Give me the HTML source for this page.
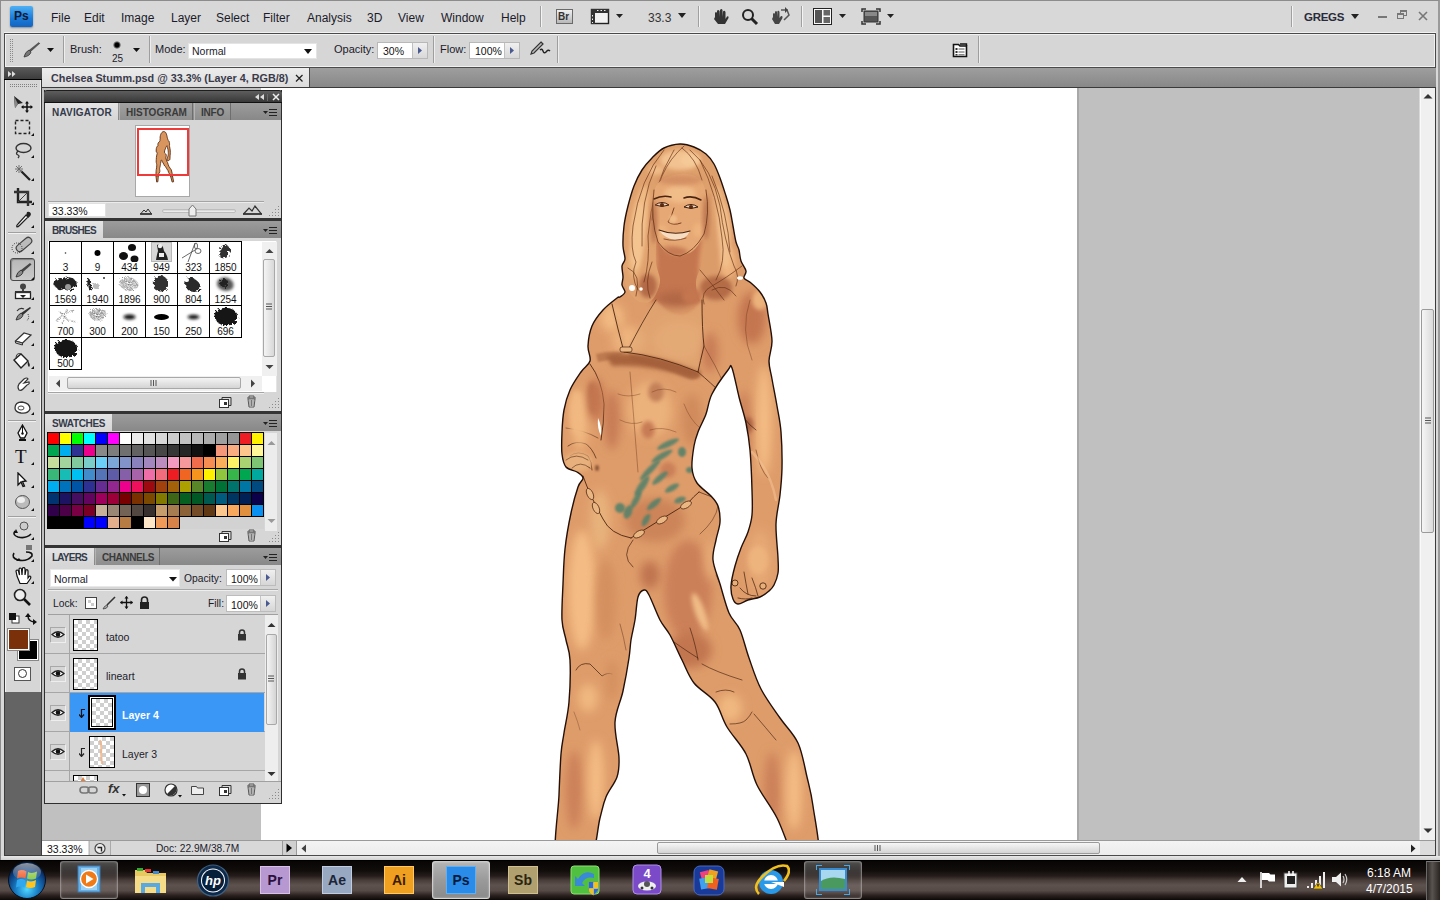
<!DOCTYPE html>
<html><head><meta charset="utf-8">
<style>
*{margin:0;padding:0;box-sizing:border-box}
html,body{width:1440px;height:900px;overflow:hidden;background:#d6d6d6;font-family:"Liberation Sans",sans-serif;color:#1b1b2b}
.a{position:absolute}
.t{position:absolute;white-space:nowrap;font-size:12px;line-height:14px}
</style></head><body>
<!-- window frame -->
<div class="a" style="left:0;top:0;width:1440px;height:860px;background:#d8d8d8;border-left:1px solid #8c8c8c;border-right:2px solid #9a9a9a;border-top:1px solid #8c8c8c"></div>
<!-- MENU BAR -->
<div id="menubar">
 <div class="a" style="left:10px;top:6px;width:23px;height:21px;border-radius:2px;background:linear-gradient(#4fb0f5,#1a7ad8 60%,#1464c0);box-shadow:0 1px 2px rgba(0,0,0,.35)"></div>
 <div class="t" style="left:14px;top:9px;font-size:12px;font-weight:bold;color:#0b1a33">Ps</div>
 <div class="t" style="left:51px;top:11px;font-size:12px">File</div>
 <div class="t" style="left:84px;top:11px;font-size:12px">Edit</div>
 <div class="t" style="left:121px;top:11px;font-size:12px">Image</div>
 <div class="t" style="left:171px;top:11px;font-size:12px">Layer</div>
 <div class="t" style="left:216px;top:11px;font-size:12px">Select</div>
 <div class="t" style="left:263px;top:11px;font-size:12px">Filter</div>
 <div class="t" style="left:307px;top:11px;font-size:12px">Analysis</div>
 <div class="t" style="left:367px;top:11px;font-size:12px">3D</div>
 <div class="t" style="left:398px;top:11px;font-size:12px">View</div>
 <div class="t" style="left:441px;top:11px;font-size:12px">Window</div>
 <div class="t" style="left:501px;top:11px;font-size:12px">Help</div>
 <div class="a" style="left:540px;top:6px;width:1px;height:21px;background:#a0a0a0;box-shadow:1px 0 0 #f4f4f4"></div>
 <div class="a" style="left:556px;top:9px;width:17px;height:15px;border:1px solid #6a6a6a;background:linear-gradient(#f0f0f0,#b8b8b8)"></div>
 <div class="t" style="left:558px;top:10px;font-size:10px;font-weight:bold;color:#333">Br</div>
 <svg class="a" style="left:590px;top:8px" width="36" height="18"><rect x="1.5" y="1.5" width="17" height="14" fill="#f2f2f2" stroke="#222" stroke-width="1.4"/><rect x="1" y="1" width="18" height="4" fill="#333"/><rect x="1" y="1" width="4" height="15" fill="#333"/><path d="M7 2.5h1.5M10.5 2.5h1.5M14 2.5h1.5M2.5 7v1.5M2.5 10.5v1.5M2.5 14v1" stroke="#eee" stroke-width="1"/><path d="M26 6h7l-3.5 4z" fill="#222"/></svg>
 <div class="t" style="left:648px;top:11px;font-size:12px;color:#333">33.3</div>
 <svg class="a" style="left:678px;top:13px" width="9" height="6"><path d="M0 0h8l-4 5z" fill="#222"/></svg>
 <div class="a" style="left:698px;top:6px;width:1px;height:21px;background:#a0a0a0;box-shadow:1px 0 0 #f4f4f4"></div>
 <svg class="a" style="left:711px;top:8px" width="20" height="18"><path d="M4 9 L4 5 Q5 3 6 5 L6 9 L6 3 Q7 1 8.5 3 L8.5 9 L9 2 Q10.5 0 11.5 2 L11.5 9 L12 3.5 Q13.5 2 14.5 4 L14.5 11 L16 8.5 Q18 7.5 17.5 10 L14 16 L7 16 L3 11 Z" fill="#333"/></svg>
 <svg class="a" style="left:741px;top:8px" width="18" height="18"><circle cx="7" cy="7" r="5" fill="none" stroke="#222" stroke-width="2"/><path d="M10.5 10.5 L16 16" stroke="#222" stroke-width="3"/></svg>
 <svg class="a" style="left:770px;top:7px" width="20" height="19"><path d="M3 10 L3 7 Q4 5 5 7 L5 10 L5 5 Q6 3 7 5 L7 10 L7.5 4 Q9 3 9.5 5 L9.5 11 L11 9 Q13 8.5 12.5 11 L9 17 L5 17 L2 12 Z" fill="#444"/><path d="M11 3 L17 3 L19 8 L14 13" fill="none" stroke="#555" stroke-width="1.5"/><path d="M15 0 L18 3 L15 6z" fill="#444"/></svg>
 <div class="a" style="left:801px;top:6px;width:1px;height:21px;background:#a0a0a0;box-shadow:1px 0 0 #f4f4f4"></div>
 <svg class="a" style="left:813px;top:8px" width="34" height="18"><rect x="0.5" y="0.5" width="18" height="16" fill="#fafafa" stroke="#222"/><rect x="2" y="2" width="7" height="13" fill="#555"/><rect x="10.5" y="2" width="6.5" height="5.5" fill="#666"/><rect x="10.5" y="9" width="6.5" height="6" fill="#666"/><path d="M26 6h7l-3.5 4z" fill="#222"/></svg>
 <svg class="a" style="left:861px;top:8px" width="36" height="18"><path d="M1 4V1h4M15 1h4v3M19 13v3h-4M5 16H1v-3" fill="none" stroke="#333" stroke-width="1.5"/><rect x="3" y="3" width="14" height="11" fill="#555" stroke="#333"/><rect x="4" y="4" width="12" height="4" fill="#888"/><path d="M26 6h7l-3.5 4z" fill="#222"/></svg>
 <div class="a" style="left:1291px;top:6px;width:1px;height:21px;background:#a0a0a0;box-shadow:1px 0 0 #f4f4f4"></div>
 <div class="t" style="left:1304px;top:10px;font-size:11.5px;font-weight:bold;color:#2a2a3a;letter-spacing:-0.3px">GREGS</div>
 <svg class="a" style="left:1351px;top:14px" width="9" height="6"><path d="M0 0h8l-4 5z" fill="#222"/></svg>
 <div class="a" style="left:1378px;top:16px;width:9px;height:2px;background:#777"></div>
 <svg class="a" style="left:1397px;top:10px" width="11" height="10"><rect x="3.5" y="0.5" width="6" height="5" fill="none" stroke="#777"/><rect x="0.5" y="3.5" width="6" height="5" fill="#d8d8d8" stroke="#777"/><rect x="0.5" y="3.5" width="6" height="1.5" fill="#777"/><rect x="3.5" y="0.5" width="6" height="1.5" fill="#777"/></svg>
 <svg class="a" style="left:1418px;top:11px" width="10" height="10"><path d="M1 1L9 9M9 1L1 9" stroke="#777" stroke-width="1.6"/></svg>
</div>
<!-- OPTIONS BAR -->
<div class="a" style="left:4px;top:32px;width:1432px;height:1px;background:#f2f2f2"></div><div class="a" style="left:4px;top:33px;width:1432px;height:35px;border:1px solid #4a4a4a;background:#d6d6d6;box-shadow:inset 1px 1px 0 #f2f2f2, inset -1px -1px 0 #f0f0f0"></div>
<svg class="a" style="left:10px;top:39px" width="3" height="24"><rect x="0" y="0" width="1" height="1" fill="#8a8a8a"/><rect x="0" y="2" width="1" height="1" fill="#8a8a8a"/><rect x="0" y="4" width="1" height="1" fill="#8a8a8a"/><rect x="0" y="6" width="1" height="1" fill="#8a8a8a"/><rect x="0" y="8" width="1" height="1" fill="#8a8a8a"/><rect x="0" y="10" width="1" height="1" fill="#8a8a8a"/><rect x="0" y="12" width="1" height="1" fill="#8a8a8a"/><rect x="0" y="14" width="1" height="1" fill="#8a8a8a"/><rect x="0" y="16" width="1" height="1" fill="#8a8a8a"/><rect x="0" y="18" width="1" height="1" fill="#8a8a8a"/><rect x="0" y="20" width="1" height="1" fill="#8a8a8a"/><rect x="0" y="22" width="1" height="1" fill="#8a8a8a"/><rect x="2" y="0" width="1" height="1" fill="#8a8a8a"/><rect x="2" y="2" width="1" height="1" fill="#8a8a8a"/><rect x="2" y="4" width="1" height="1" fill="#8a8a8a"/><rect x="2" y="6" width="1" height="1" fill="#8a8a8a"/><rect x="2" y="8" width="1" height="1" fill="#8a8a8a"/><rect x="2" y="10" width="1" height="1" fill="#8a8a8a"/><rect x="2" y="12" width="1" height="1" fill="#8a8a8a"/><rect x="2" y="14" width="1" height="1" fill="#8a8a8a"/><rect x="2" y="16" width="1" height="1" fill="#8a8a8a"/><rect x="2" y="18" width="1" height="1" fill="#8a8a8a"/><rect x="2" y="20" width="1" height="1" fill="#8a8a8a"/><rect x="2" y="22" width="1" height="1" fill="#8a8a8a"/></svg>
<svg class="a" style="left:22px;top:41px" width="20" height="18"><path d="M17 1 L18.5 2.5 L9 11 L7 9 Z" fill="#555"/><path d="M17 1 L18.5 2.5 L9 11" fill="none" stroke="#eee" stroke-width="0.6"/><path d="M7 9 L9 11 Q8 15 2 16 Q3 11 7 9Z" fill="#777" stroke="#333" stroke-width="0.8"/></svg>
<svg class="a" style="left:47px;top:48px" width="8" height="5"><path d="M0 0h7l-3.5 4z" fill="#111"/></svg>
<div class="a" style="left:63px;top:36px;width:1px;height:27px;background:#9e9e9e;box-shadow:1px 0 0 #eee"></div>
<div class="t" style="left:70px;top:42px;font-size:11px;color:#1b1b2b">Brush:</div>
<div class="a" style="left:113px;top:41px;width:8px;height:8px;border-radius:50%;background:radial-gradient(#000 35%,rgba(0,0,0,0) 75%)"></div>
<div class="t" style="left:112px;top:52px;font-size:10px;color:#1b1b2b">25</div>
<svg class="a" style="left:133px;top:48px" width="8" height="5"><path d="M0 0h7l-3.5 4z" fill="#111"/></svg>
<div class="a" style="left:149px;top:36px;width:1px;height:27px;background:#9e9e9e;box-shadow:1px 0 0 #eee"></div>
<div class="t" style="left:155px;top:42px;font-size:11px;color:#1b1b2b">Mode:</div>
<div class="a" style="left:188px;top:43px;width:129px;height:16px;background:#fff;border:1px solid #e4e4e4"></div>
<div class="t" style="left:192px;top:44px;font-size:10.5px;color:#1b1b2b">Normal</div>
<svg class="a" style="left:304px;top:49px" width="9" height="6"><path d="M0 0h8l-4 5z" fill="#111"/></svg>
<div class="t" style="left:334px;top:42px;font-size:11px;color:#1b1b2b">Opacity:</div>
<div class="a" style="left:377px;top:42px;width:51px;height:17px;background:#fff;border:1px solid #b8b8b8"></div>
<div class="a" style="left:412px;top:43px;width:15px;height:15px;background:linear-gradient(#f0f0f0,#d8d8d8);border-left:1px solid #c0c0c0"></div>
<svg class="a" style="left:418px;top:47px" width="5" height="8"><path d="M0 0v7l4-3.5z" fill="#4a5a90"/></svg>
<div class="t" style="left:383px;top:44px;font-size:10.5px;color:#111">30%</div>
<div class="a" style="left:433px;top:36px;width:1px;height:27px;background:#9e9e9e;box-shadow:1px 0 0 #eee"></div>
<div class="t" style="left:440px;top:42px;font-size:11px;color:#1b1b2b">Flow:</div>
<div class="a" style="left:469px;top:42px;width:51px;height:17px;background:#fff;border:1px solid #b8b8b8"></div>
<div class="a" style="left:504px;top:43px;width:15px;height:15px;background:linear-gradient(#f0f0f0,#d8d8d8);border-left:1px solid #c0c0c0"></div>
<svg class="a" style="left:510px;top:47px" width="5" height="8"><path d="M0 0v7l4-3.5z" fill="#4a5a90"/></svg>
<div class="t" style="left:475px;top:44px;font-size:10.5px;color:#111">100%</div>
<svg class="a" style="left:528px;top:40px" width="24" height="20"><path d="M13 2 L15 4 L6 13 L3 14 L4 11 Z" fill="#bbb" stroke="#333" stroke-width="1.2"/><path d="M12 10 Q14 8 15 11 Q16 14 18 12 Q20 9 22 11" fill="none" stroke="#222" stroke-width="1.4"/></svg>
<div class="a" style="left:557px;top:36px;width:1px;height:27px;background:#9e9e9e;box-shadow:1px 0 0 #eee"></div>
<svg class="a" style="left:952px;top:42px" width="16" height="16"><path d="M1.5 2.5h5l1.5 1.5h6.5v10.5h-13z" fill="#fff" stroke="#111" stroke-width="1.6"/><path d="M8 2h6.5v2" stroke="#111" stroke-width="1.4" fill="none"/><rect x="3.5" y="6" width="2" height="2" fill="#333"/><rect x="3.5" y="9" width="2" height="2" fill="#333"/><rect x="3.5" y="12" width="2" height="1.5" fill="#333"/><path d="M6.5 7h6M6.5 10h6M6.5 12.8h6" stroke="#555" stroke-width="1"/></svg>
<div class="a" style="left:978px;top:36px;width:1px;height:27px;background:#9e9e9e;box-shadow:1px 0 0 #eee"></div>
<!-- TAB BAR -->
<div class="a" style="left:42px;top:68px;width:1394px;height:20px;background:linear-gradient(#9e9e9e,#888);border-bottom:1px solid #3a3a3a"></div>
<div class="a" style="left:42px;top:68px;width:268px;height:19px;background:linear-gradient(#ececec,#dcdcdc);border-right:1px solid #4a4a4a"></div>
<div class="t" style="left:51px;top:71px;font-size:10.8px;font-weight:bold;color:#3a3a4a">Chelsea Stumm.psd @ 33.3% (Layer 4, RGB/8)</div>
<svg class="a" style="left:295px;top:74px" width="9" height="9"><path d="M1 1l6.5 6.5M7.5 1l-6.5 6.5" stroke="#222" stroke-width="1.3"/></svg>
<!-- DOC AREA -->
<div class="a" style="left:42px;top:88px;width:1377px;height:752px;background:#c0c0c0"></div>
<div class="a" style="left:261px;top:88px;width:816px;height:752px;background:#fff"></div>
<div class="a" style="left:1077px;top:88px;width:2px;height:752px;background:#a8a8a8"></div>
<!-- FIGURE -->
<svg class="a" style="left:0;top:0" width="1440" height="900" viewBox="0 0 1440 900">
<defs><clipPath id="cv"><rect x="261" y="88" width="816" height="752"/></clipPath><clipPath id="bd"><path d="M680,144 C685.0,143.8 689.7,145.3 694,147 C698.3,148.7 702.7,151.2 706,154 C709.3,156.8 711.7,160.0 714,164 C716.3,168.0 718.0,172.7 720,178 C722.0,183.3 724.3,190.7 726,196 C727.7,201.3 728.8,205.0 730,210 C731.2,215.0 732.0,220.7 733,226 C734.0,231.3 735.0,238.0 736,242 C737.0,246.0 738.2,246.8 739,250 C739.8,253.2 739.8,257.5 741,261 C742.2,264.5 745.5,268.2 746,271 C746.5,273.8 743.2,276.0 744,278 C744.8,280.0 748.3,280.7 751,283 C753.7,285.3 757.5,288.7 760,292 C762.5,295.3 764.7,299.3 766,303 C767.3,306.7 767.0,307.7 768,314 C769.0,320.3 771.8,333.2 772,341 C772.2,348.8 769.0,354.7 769,361 C769.0,367.3 770.7,371.5 772,379 C773.3,386.5 775.5,397.2 777,406 C778.5,414.8 780.2,421.7 781,432 C781.8,442.3 782.2,457.5 782,468 C781.8,478.5 781.0,485.7 780,495 C779.0,504.3 776.3,513.5 776,524 C775.7,534.5 777.7,549.8 778,558 C778.3,566.2 778.7,568.5 778,573 C777.3,577.5 775.5,582.0 774,585 C772.5,588.0 771.3,589.0 769,591 C766.7,593.0 763.5,595.5 760,597 C756.5,598.5 751.7,598.8 748,600 C744.3,601.2 740.5,604.2 738,604 C735.5,603.8 734.2,602.0 733,599 C731.8,596.0 730.7,591.5 731,586 C731.3,580.5 733.3,572.3 735,566 C736.7,559.7 738.8,553.7 741,548 C743.2,542.3 746.2,537.5 748,532 C749.8,526.5 751.3,522.0 752,515 C752.7,508.0 752.3,500.8 752,490 C751.7,479.2 751.0,461.2 750,450 C749.0,438.8 747.8,431.8 746,423 C744.2,414.2 741.3,406.2 739,397 C736.7,387.8 733.8,372.5 732,368 C730.2,363.5 731.3,365.7 728,370 C724.7,374.3 715.7,386.7 712,394 C708.3,401.3 708.3,407.7 706,414 C703.7,420.3 700.0,426.7 698,432 C696.0,437.3 695.0,440.0 694,446 C693.0,452.0 691.5,461.8 692,468 C692.5,474.2 693.8,478.3 697,483 C700.2,487.7 707.5,492.2 711,496 C714.5,499.8 716.5,501.7 718,506 C719.5,510.3 720.3,516.3 720,522 C719.7,527.7 717.2,533.7 716,540 C714.8,546.3 712.3,552.7 713,560 C713.7,567.3 717.3,575.2 720,584 C722.7,592.8 725.7,605.3 729,613 C732.3,620.7 736.7,622.5 740,630 C743.3,637.5 745.5,648.2 749,658 C752.5,667.8 755.8,679.0 761,689 C766.2,699.0 773.8,709.0 780,718 C786.2,727.0 793.5,733.2 798,743 C802.5,752.8 804.5,766.5 807,777 C809.5,787.5 811.0,791.8 813,806 C815.0,820.2 821.7,852.7 819,862 C816.3,871.3 804.0,869.3 797,862 C790.0,854.7 783.7,830.8 777,818 C770.3,805.2 762.2,795.7 757,785 C751.8,774.3 751.0,763.7 746,754 C741.0,744.3 732.2,735.7 727,727 C721.8,718.3 720.5,709.3 715,702 C709.5,694.7 699.5,690.0 694,683 C688.5,676.0 686.0,668.0 682,660 C678.0,652.0 673.7,641.7 670,635 C666.3,628.3 663.5,626.7 660,620 C656.5,613.3 651.7,600.0 649,595 C646.3,590.0 645.8,589.7 644,590 C642.2,590.3 639.5,592.0 638,597 C636.5,602.0 636.2,612.8 635,620 C633.8,627.2 632.0,633.7 631,640 C630.0,646.3 630.3,649.5 629,658 C627.7,666.5 625.3,680.3 623,691 C620.7,701.7 615.7,710.8 615,722 C614.3,733.2 618.7,748.8 619,758 C619.3,767.2 619.2,770.5 617,777 C614.8,783.5 608.8,790.2 606,797 C603.2,803.8 602.8,807.2 600,818 C597.2,828.8 596.2,854.7 589,862 C581.8,869.3 562.0,873.2 557,862 C552.0,850.8 558.3,813.0 559,795 C559.7,777.0 560.2,764.3 561,754 C561.8,743.7 562.7,741.7 564,733 C565.3,724.3 568.0,714.2 569,702 C570.0,689.8 570.5,670.3 570,660 C569.5,649.7 567.3,646.7 566,640 C564.7,633.3 562.5,629.3 562,620 C561.5,610.7 562.5,595.8 563,584 C563.5,572.2 563.7,560.8 565,549 C566.3,537.2 568.8,523.3 571,513 C573.2,502.7 576.0,492.8 578,487 C580.0,481.2 583.2,480.5 583,478 C582.8,475.5 579.8,473.8 577,472 C574.2,470.2 568.5,470.0 566,467 C563.5,464.0 562.7,459.8 562,454 C561.3,448.2 561.7,439.3 562,432 C562.3,424.7 562.7,417.0 564,410 C565.3,403.0 567.2,396.3 570,390 C572.8,383.7 577.7,376.8 581,372 C584.3,367.2 588.8,365.3 590,361 C591.2,356.7 587.7,351.8 588,346 C588.3,340.2 589.5,332.0 592,326 C594.5,320.0 598.8,314.7 603,310 C607.2,305.3 614.2,300.2 617,298 C619.8,295.8 618.7,298.0 620,297 C621.3,296.0 624.7,294.0 625,292 C625.3,290.0 622.3,287.5 622,285 C621.7,282.5 623.0,280.2 623,277 C623.0,273.8 621.7,269.0 622,266 C622.3,263.0 624.8,262.3 625,259 C625.2,255.7 623.2,251.5 623,246 C622.8,240.5 623.2,232.7 624,226 C624.8,219.3 626.3,212.7 628,206 C629.7,199.3 631.7,192.0 634,186 C636.3,180.0 639.0,174.7 642,170 C645.0,165.3 648.3,161.7 652,158 C655.7,154.3 659.3,150.3 664,148 C668.7,145.7 675.0,144.2 680,144 Z"/></clipPath><filter id="bl" x="-50%" y="-50%" width="200%" height="200%"><feGaussianBlur stdDeviation="5"/></filter><filter id="bl2" x="-50%" y="-50%" width="200%" height="200%"><feGaussianBlur stdDeviation="2"/></filter><filter id="bl1" x="-50%" y="-50%" width="200%" height="200%"><feGaussianBlur stdDeviation="1"/></filter></defs>
<g clip-path="url(#cv)">
<path d="M680,144 C685.0,143.8 689.7,145.3 694,147 C698.3,148.7 702.7,151.2 706,154 C709.3,156.8 711.7,160.0 714,164 C716.3,168.0 718.0,172.7 720,178 C722.0,183.3 724.3,190.7 726,196 C727.7,201.3 728.8,205.0 730,210 C731.2,215.0 732.0,220.7 733,226 C734.0,231.3 735.0,238.0 736,242 C737.0,246.0 738.2,246.8 739,250 C739.8,253.2 739.8,257.5 741,261 C742.2,264.5 745.5,268.2 746,271 C746.5,273.8 743.2,276.0 744,278 C744.8,280.0 748.3,280.7 751,283 C753.7,285.3 757.5,288.7 760,292 C762.5,295.3 764.7,299.3 766,303 C767.3,306.7 767.0,307.7 768,314 C769.0,320.3 771.8,333.2 772,341 C772.2,348.8 769.0,354.7 769,361 C769.0,367.3 770.7,371.5 772,379 C773.3,386.5 775.5,397.2 777,406 C778.5,414.8 780.2,421.7 781,432 C781.8,442.3 782.2,457.5 782,468 C781.8,478.5 781.0,485.7 780,495 C779.0,504.3 776.3,513.5 776,524 C775.7,534.5 777.7,549.8 778,558 C778.3,566.2 778.7,568.5 778,573 C777.3,577.5 775.5,582.0 774,585 C772.5,588.0 771.3,589.0 769,591 C766.7,593.0 763.5,595.5 760,597 C756.5,598.5 751.7,598.8 748,600 C744.3,601.2 740.5,604.2 738,604 C735.5,603.8 734.2,602.0 733,599 C731.8,596.0 730.7,591.5 731,586 C731.3,580.5 733.3,572.3 735,566 C736.7,559.7 738.8,553.7 741,548 C743.2,542.3 746.2,537.5 748,532 C749.8,526.5 751.3,522.0 752,515 C752.7,508.0 752.3,500.8 752,490 C751.7,479.2 751.0,461.2 750,450 C749.0,438.8 747.8,431.8 746,423 C744.2,414.2 741.3,406.2 739,397 C736.7,387.8 733.8,372.5 732,368 C730.2,363.5 731.3,365.7 728,370 C724.7,374.3 715.7,386.7 712,394 C708.3,401.3 708.3,407.7 706,414 C703.7,420.3 700.0,426.7 698,432 C696.0,437.3 695.0,440.0 694,446 C693.0,452.0 691.5,461.8 692,468 C692.5,474.2 693.8,478.3 697,483 C700.2,487.7 707.5,492.2 711,496 C714.5,499.8 716.5,501.7 718,506 C719.5,510.3 720.3,516.3 720,522 C719.7,527.7 717.2,533.7 716,540 C714.8,546.3 712.3,552.7 713,560 C713.7,567.3 717.3,575.2 720,584 C722.7,592.8 725.7,605.3 729,613 C732.3,620.7 736.7,622.5 740,630 C743.3,637.5 745.5,648.2 749,658 C752.5,667.8 755.8,679.0 761,689 C766.2,699.0 773.8,709.0 780,718 C786.2,727.0 793.5,733.2 798,743 C802.5,752.8 804.5,766.5 807,777 C809.5,787.5 811.0,791.8 813,806 C815.0,820.2 821.7,852.7 819,862 C816.3,871.3 804.0,869.3 797,862 C790.0,854.7 783.7,830.8 777,818 C770.3,805.2 762.2,795.7 757,785 C751.8,774.3 751.0,763.7 746,754 C741.0,744.3 732.2,735.7 727,727 C721.8,718.3 720.5,709.3 715,702 C709.5,694.7 699.5,690.0 694,683 C688.5,676.0 686.0,668.0 682,660 C678.0,652.0 673.7,641.7 670,635 C666.3,628.3 663.5,626.7 660,620 C656.5,613.3 651.7,600.0 649,595 C646.3,590.0 645.8,589.7 644,590 C642.2,590.3 639.5,592.0 638,597 C636.5,602.0 636.2,612.8 635,620 C633.8,627.2 632.0,633.7 631,640 C630.0,646.3 630.3,649.5 629,658 C627.7,666.5 625.3,680.3 623,691 C620.7,701.7 615.7,710.8 615,722 C614.3,733.2 618.7,748.8 619,758 C619.3,767.2 619.2,770.5 617,777 C614.8,783.5 608.8,790.2 606,797 C603.2,803.8 602.8,807.2 600,818 C597.2,828.8 596.2,854.7 589,862 C581.8,869.3 562.0,873.2 557,862 C552.0,850.8 558.3,813.0 559,795 C559.7,777.0 560.2,764.3 561,754 C561.8,743.7 562.7,741.7 564,733 C565.3,724.3 568.0,714.2 569,702 C570.0,689.8 570.5,670.3 570,660 C569.5,649.7 567.3,646.7 566,640 C564.7,633.3 562.5,629.3 562,620 C561.5,610.7 562.5,595.8 563,584 C563.5,572.2 563.7,560.8 565,549 C566.3,537.2 568.8,523.3 571,513 C573.2,502.7 576.0,492.8 578,487 C580.0,481.2 583.2,480.5 583,478 C582.8,475.5 579.8,473.8 577,472 C574.2,470.2 568.5,470.0 566,467 C563.5,464.0 562.7,459.8 562,454 C561.3,448.2 561.7,439.3 562,432 C562.3,424.7 562.7,417.0 564,410 C565.3,403.0 567.2,396.3 570,390 C572.8,383.7 577.7,376.8 581,372 C584.3,367.2 588.8,365.3 590,361 C591.2,356.7 587.7,351.8 588,346 C588.3,340.2 589.5,332.0 592,326 C594.5,320.0 598.8,314.7 603,310 C607.2,305.3 614.2,300.2 617,298 C619.8,295.8 618.7,298.0 620,297 C621.3,296.0 624.7,294.0 625,292 C625.3,290.0 622.3,287.5 622,285 C621.7,282.5 623.0,280.2 623,277 C623.0,273.8 621.7,269.0 622,266 C622.3,263.0 624.8,262.3 625,259 C625.2,255.7 623.2,251.5 623,246 C622.8,240.5 623.2,232.7 624,226 C624.8,219.3 626.3,212.7 628,206 C629.7,199.3 631.7,192.0 634,186 C636.3,180.0 639.0,174.7 642,170 C645.0,165.3 648.3,161.7 652,158 C655.7,154.3 659.3,150.3 664,148 C668.7,145.7 675.0,144.2 680,144 Z" fill="#de9c6a"/>
<g clip-path="url(#bd)">
<path d="M656 240 Q660 276 650 302 L704 302 Q694 276 702 240Z" fill="#c47650" filter="url(#bl2)" opacity="1"/>
<ellipse cx="676" cy="300" rx="20" ry="8" fill="#b06644" filter="url(#bl)" opacity="1"/>
<path d="M680,144 C687.0,145.0 699.3,148.3 706,154 C712.7,159.7 716.0,168.7 720,178 C724.0,187.3 731.3,204.0 730,210 C728.7,216.0 717.0,218.0 712,214 C707.0,210.0 705.3,192.3 700,186 C694.7,179.7 687.3,176.0 680,176 C672.7,176.0 661.3,180.0 656,186 C650.7,192.0 652.7,208.7 648,212 C643.3,215.3 629.0,213.0 628,206 C627.0,199.0 636.0,179.7 642,170 C648.0,160.3 657.7,152.3 664,148 C670.3,143.7 673.0,143.0 680,144 Z" fill="#dea06c"/>
<path d="M628,200 C632.3,195.0 645.3,191.0 650,196 C654.7,201.0 655.0,219.0 656,230 C657.0,241.0 655.3,253.3 656,262 C656.7,270.7 660.7,275.7 660,282 C659.3,288.3 655.3,296.7 652,300 C648.7,303.3 643.8,303.3 640,302 C636.2,300.7 631.8,296.7 629,292 C626.2,287.3 624.0,281.7 623,274 C622.0,266.3 622.8,254.0 623,246 C623.2,238.0 623.2,233.7 624,226 C624.8,218.3 623.7,205.0 628,200 Z" fill="#e0a26e"/>
<path d="M704,196 C707.7,190.7 723.2,195.0 728,200 C732.8,205.0 731.3,217.7 733,226 C734.7,234.3 735.8,242.5 738,250 C740.2,257.5 745.0,266.0 746,271 C747.0,276.0 746.7,275.8 744,280 C741.3,284.2 735.3,292.0 730,296 C724.7,300.0 717.0,303.3 712,304 C707.0,304.7 702.7,303.7 700,300 C697.3,296.3 695.7,288.3 696,282 C696.3,275.7 700.3,270.3 702,262 C703.7,253.7 705.7,243.0 706,232 C706.3,221.0 700.3,201.3 704,196 Z" fill="#dc9c6a"/>
<ellipse cx="680" cy="160" rx="20" ry="10" fill="#f2c290" filter="url(#bl2)" opacity="1"/>
<ellipse cx="640" cy="215" rx="7" ry="30" fill="#f0ba84" filter="url(#bl2)" opacity="1" transform="rotate(10 640 215)"/>
<ellipse cx="722" cy="215" rx="6" ry="30" fill="#eeb882" filter="url(#bl2)" opacity="1" transform="rotate(-10 722 215)"/>
<ellipse cx="634" cy="262" rx="6" ry="16" fill="#eab47e" filter="url(#bl2)" opacity="1"/>
<ellipse cx="728" cy="262" rx="8" ry="16" fill="#eeb47e" filter="url(#bl2)" opacity="1"/>
<ellipse cx="648" cy="286" rx="9" ry="12" fill="#b46a46" filter="url(#bl2)" opacity="1"/>
<ellipse cx="716" cy="288" rx="16" ry="12" fill="#b46c46" filter="url(#bl2)" opacity="1"/>
<ellipse cx="692" cy="296" rx="10" ry="8" fill="#c47650" filter="url(#bl2)" opacity="1"/>
<ellipse cx="638" cy="236" rx="7" ry="34" fill="#f4c490" filter="url(#bl2)" opacity="1" transform="rotate(4 638 236)"/>
<ellipse cx="724" cy="236" rx="6" ry="32" fill="#f2c08c" filter="url(#bl2)" opacity="1" transform="rotate(-4 724 236)"/>
<ellipse cx="690" cy="160" rx="10" ry="6" fill="#f6ca98" filter="url(#bl2)" opacity="1"/>
<ellipse cx="656" cy="170" rx="8" ry="5" fill="#f0bc88" filter="url(#bl2)" opacity="1"/>
<path d="M664 150 Q640 178 633 226 Q630 250 636 262 Q630 276 638 290" fill="none" stroke="#6a3418" stroke-width="0.8" opacity="0.85" stroke-linecap="round"/>
<path d="M674 150 Q652 186 648 236 Q650 262 644 282" fill="none" stroke="#6a3418" stroke-width="0.8" opacity="0.85" stroke-linecap="round"/>
<path d="M690 150 Q712 168 720 206 Q724 240 734 266 Q740 276 736 286" fill="none" stroke="#6a3418" stroke-width="0.8" opacity="0.85" stroke-linecap="round"/>
<path d="M700 160 Q718 196 722 238 Q726 262 716 280" fill="none" stroke="#6a3418" stroke-width="0.8" opacity="0.85" stroke-linecap="round"/>
<path d="M656 166 Q640 200 642 246" fill="none" stroke="#6a3418" stroke-width="0.8" opacity="0.85" stroke-linecap="round"/>
<path d="M712 176 Q728 214 730 252" fill="none" stroke="#6a3418" stroke-width="0.8" opacity="0.85" stroke-linecap="round"/>
<path d="M684 146 Q670 158 662 176 Q654 196 652 220" fill="none" stroke="#6a3418" stroke-width="0.8" opacity="0.85" stroke-linecap="round"/>
<path d="M682 148 Q696 158 702 180" fill="none" stroke="#6a3418" stroke-width="0.8" opacity="0.85" stroke-linecap="round"/>
<path d="M628 268 Q642 274 636 296" fill="none" stroke="#6a3418" stroke-width="0.8" opacity="0.85" stroke-linecap="round"/>
<path d="M742 266 Q726 278 712 286 Q700 292 704 304" fill="none" stroke="#6a3418" stroke-width="0.8" opacity="0.85" stroke-linecap="round"/>
<path d="M712 290 Q726 282 736 296" fill="none" stroke="#6a3418" stroke-width="0.8" opacity="0.85" stroke-linecap="round"/>
<path d="M700 270 Q712 284 724 300" fill="none" stroke="#6a3418" stroke-width="0.8" opacity="0.85" stroke-linecap="round"/>
<path d="M652 262 Q644 282 650 298" fill="none" stroke="#6a3418" stroke-width="0.8" opacity="0.85" stroke-linecap="round"/>
<path d="M656,186 C660.5,178.3 672.3,174.7 680,174 C687.7,173.3 697.3,175.3 702,182 C706.7,188.7 707.7,205.3 708,214 C708.3,222.7 706.3,228.0 704,234 C701.7,240.0 698.0,246.3 694,250 C690.0,253.7 684.3,255.3 680,256 C675.7,256.7 671.7,256.3 668,254 C664.3,251.7 660.5,247.7 658,242 C655.5,236.3 653.3,229.3 653,220 C652.7,210.7 651.5,193.7 656,186 Z" fill="#e6a874"/>
<ellipse cx="680" cy="194" rx="16" ry="9" fill="#f0bc88" filter="url(#bl2)" opacity="1"/>
<ellipse cx="662" cy="232" rx="5" ry="7" fill="#eeb47e" filter="url(#bl2)" opacity="1"/>
<ellipse cx="698" cy="230" rx="5" ry="7" fill="#eeb47e" filter="url(#bl2)" opacity="1"/>
<ellipse cx="676" cy="252" rx="12" ry="5" fill="#c87c54" filter="url(#bl2)" opacity="1"/>
<path d="M654 199 Q662 195 671 197" fill="none" stroke="#4a2410" stroke-width="1.5" opacity="1" stroke-linecap="round"/>
<path d="M684 198 Q692 195 701 200" fill="none" stroke="#4a2410" stroke-width="1.5" opacity="1" stroke-linecap="round"/>
<path d="M655 205 Q662 200 669 205 Q662 208 655 205Z" fill="#f2d8c0" stroke="#3a1a08" stroke-width="1"/><path d="M684 207 Q691 202 698 207 Q691 210 684 207Z" fill="#f2d8c0" stroke="#3a1a08" stroke-width="1"/>
<circle cx="662" cy="205" r="2.1" fill="#5a2a10"/><circle cx="691" cy="207" r="2.1" fill="#5a2a10"/>
<path d="M674 208 Q672 216 668 222 Q673 226 681 223" fill="none" stroke="#7a4020" stroke-width="1" opacity="1" stroke-linecap="round"/>
<ellipse cx="673" cy="219" rx="4" ry="4" fill="#f0bc88" filter="url(#bl1)" opacity="1"/>
<path d="M659 230 Q674 236 690 231 Q686 240 675 240 Q664 238 659 230Z" fill="#f6dcc0" opacity="1"/>
<path d="M659 230 Q674 236 690 231" fill="none" stroke="#4a2410" stroke-width="1.2" opacity="1" stroke-linecap="round"/>
<path d="M664 239 Q675 242 686 238" fill="none" stroke="#6a3418" stroke-width="0.9" opacity="0.8" stroke-linecap="round"/>
<ellipse cx="668" cy="250" rx="10" ry="4" fill="#c47c54" filter="url(#bl2)" opacity="0.6"/>
<ellipse cx="654" cy="222" rx="3" ry="22" fill="#b06844" filter="url(#bl2)" opacity="0.8"/>
<ellipse cx="706" cy="218" rx="3" ry="22" fill="#b06844" filter="url(#bl2)" opacity="0.8"/>
<ellipse cx="680" cy="180" rx="22" ry="5" fill="#c88058" filter="url(#bl2)" opacity="0.6"/>
<path d="M654 190 Q650 220 658 242 Q668 256 680 256 Q694 252 704 234 Q710 214 706 190" fill="none" stroke="#5a2a10" stroke-width="0.9" opacity="0.8" stroke-linecap="round"/>
<ellipse cx="752" cy="318" rx="14" ry="26" fill="#c47650" filter="url(#bl)" opacity="1"/>
<ellipse cx="760" cy="300" rx="8" ry="10" fill="#ecb27c" filter="url(#bl2)" opacity="1"/>
<ellipse cx="612" cy="318" rx="12" ry="14" fill="#f2ba82" filter="url(#bl)" opacity="1"/>
<ellipse cx="628" cy="340" rx="16" ry="14" fill="#eeb47e" filter="url(#bl)" opacity="1"/>
<ellipse cx="680" cy="340" rx="26" ry="18" fill="#e8ac78" filter="url(#bl)" opacity="1"/>
<path d="M606 356 Q640 348 700 370 Q704 378 690 378 Q650 364 612 366Z" fill="#a8643e" filter="url(#bl2)" opacity="1"/>
<ellipse cx="710" cy="352" rx="8" ry="20" fill="#c87c54" filter="url(#bl)" opacity="1"/>
<ellipse cx="612" cy="420" rx="8" ry="30" fill="#c87c54" filter="url(#bl)" opacity="1"/>
<ellipse cx="650" cy="410" rx="22" ry="28" fill="#ecb27c" filter="url(#bl)" opacity="1"/>
<ellipse cx="692" cy="420" rx="10" ry="26" fill="#d08a5c" filter="url(#bl)" opacity="1"/>
<ellipse cx="656" cy="392" rx="8" ry="10" fill="#c48058" filter="url(#bl2)" opacity="1"/>
<ellipse cx="648" cy="430" rx="7" ry="9" fill="#c87c54" filter="url(#bl2)" opacity="1"/>
<ellipse cx="668" cy="470" rx="8" ry="8" fill="#cc8058" filter="url(#bl2)" opacity="1"/>
<path d="M630 372 Q634 420 638 472" fill="none" stroke="#6a3418" stroke-width="0.7" opacity="0.6" stroke-linecap="round"/>
<path d="M618 394 Q628 398 640 394 M652 392 Q664 386 676 392 M620 420 Q632 426 642 422 M650 430 Q662 426 676 432 M684 404 Q690 420 700 428" fill="none" stroke="#6a3418" stroke-width="0.7" opacity="0.55" stroke-linecap="round"/>
<path d="M612 306 Q616 330 624 352 Q660 354 698 372 Q704 340 702 300 Q682 330 656 300 Q640 322 626 350 Q622 320 612 306Z" fill="#e2a874" filter="url(#bl1)" opacity="0.6"/>
<path d="M612 304 Q618 330 624 352" fill="none" stroke="#4a2410" stroke-width="0.9" opacity="1" stroke-linecap="round"/>
<path d="M702 300 Q702 330 704 346 Q700 362 698 372" fill="none" stroke="#4a2410" stroke-width="0.9" opacity="1" stroke-linecap="round"/>
<path d="M624 352 Q660 356 698 372" fill="none" stroke="#4a2410" stroke-width="0.9" opacity="1" stroke-linecap="round"/>
<path d="M628 350 Q642 322 656 300" fill="none" stroke="#4a2410" stroke-width="0.8" opacity="1" stroke-linecap="round"/>
<path d="M698 372 Q712 384 720 392" fill="none" stroke="#4a2410" stroke-width="0.8" opacity="1" stroke-linecap="round"/>
<path d="M704 346 Q716 366 724 384" fill="none" stroke="#4a2410" stroke-width="0.6" opacity="0.7" stroke-linecap="round"/>
<path d="M596 354 Q612 350 626 353 Q612 360 598 362Z" fill="#a25e3a" filter="url(#bl1)" opacity="0.55"/>
<path d="M628 354 Q664 358 700 374 Q700 380 690 379 Q660 366 632 360Z" fill="#a25e3a" filter="url(#bl1)" opacity="0.6"/>
<rect x="620" y="347" width="12" height="5" rx="2" fill="#eab682" stroke="#4a2410" stroke-width="0.7"/>
<path d="M590 364 Q602 380 604 404 Q604 424 601 440" fill="none" stroke="#3a1a08" stroke-width="0.9" opacity="0.9" stroke-linecap="round"/>
<path d="M566 428 Q584 430 598 438" fill="none" stroke="#4a2410" stroke-width="0.8" opacity="0.7" stroke-linecap="round"/>
<ellipse cx="576" cy="412" rx="7" ry="22" fill="#eeb47e" filter="url(#bl2)" opacity="1"/>
<ellipse cx="592" cy="398" rx="5" ry="16" fill="#b87048" filter="url(#bl2)" opacity="1"/>
<path d="M568 446 Q576 440 586 444 Q592 448 596 458 M570 456 Q578 450 588 456 Q592 462 592 470 M576 466 Q584 462 590 468" fill="none" stroke="#3a1a08" stroke-width="0.8" opacity="0.85" stroke-linecap="round"/>
<ellipse cx="597" cy="468" rx="2" ry="3" fill="#6a3a24" filter="url(#bl1)" opacity="0.7"/>
<ellipse cx="764" cy="420" rx="8" ry="55" fill="#f4bc84" filter="url(#bl)" opacity="1"/>
<ellipse cx="744" cy="430" rx="6" ry="40" fill="#c87c54" filter="url(#bl)" opacity="1"/>
<ellipse cx="580" cy="420" rx="8" ry="30" fill="#f2ba82" filter="url(#bl)" opacity="1"/>
<ellipse cx="596" cy="400" rx="8" ry="22" fill="#c47650" filter="url(#bl)" opacity="1"/>
<ellipse cx="760" cy="560" rx="12" ry="30" fill="#e6a874" filter="url(#bl)" opacity="1"/>
<path d="M750 300 Q740 330 752 360" fill="none" stroke="#6a3418" stroke-width="0.7" opacity="0.6" stroke-linecap="round"/>
<path d="M756 450 Q760 470 768 478" fill="none" stroke="#6a3418" stroke-width="0.8" opacity="0.7" stroke-linecap="round"/>
<ellipse cx="578" cy="462" rx="14" ry="10" fill="#e8b07c" filter="url(#bl2)" opacity="1"/>
<path d="M566 460 Q576 452 588 460 M572 468 Q580 460 590 468" fill="none" stroke="#4a2410" stroke-width="0.7" opacity="0.8" stroke-linecap="round"/>
<ellipse cx="758" cy="560" rx="10" ry="14" fill="#eeb47e" filter="url(#bl2)" opacity="1"/>
<circle cx="735" cy="583" r="3" fill="#e8ae78" stroke="#3a1a08" stroke-width="0.8"/><circle cx="763" cy="586" r="3.2" fill="#e8ae78" stroke="#3a1a08" stroke-width="0.8"/>
<path d="M744 572 Q746 584 748 594 M740 588 Q746 596 756 596 M752 578 Q756 588 758 596 M738 598 Q746 600 752 598" fill="none" stroke="#3a1a08" stroke-width="0.8" opacity="0.85" stroke-linecap="round"/>
<path d="M752 452 Q770 470 776 500" fill="none" stroke="#f4c090" stroke-width="2.5" opacity="0.6" stroke-linecap="round"/>
<ellipse cx="748" cy="425" rx="5" ry="8" fill="#a86040" filter="url(#bl2)" opacity="1"/>
<path d="M744 418 Q750 426 756 430" fill="none" stroke="#3a1a08" stroke-width="0.8" opacity="0.8" stroke-linecap="round"/>
<ellipse cx="655" cy="520" rx="30" ry="22" fill="#cc8458" filter="url(#bl)" opacity="1"/>
<ellipse cx="600" cy="520" rx="10" ry="30" fill="#e8b27c" filter="url(#bl)" opacity="1"/>
<ellipse cx="668" cy="444" rx="12" ry="3" fill="#4f806a" filter="url(#bl1)" opacity="0.85" transform="rotate(-25 668 444)"/>
<ellipse cx="662" cy="456" rx="12" ry="3" fill="#4f806a" filter="url(#bl1)" opacity="0.85" transform="rotate(-30 662 456)"/>
<ellipse cx="682" cy="452" rx="4" ry="5" fill="#4f806a" filter="url(#bl1)" opacity="0.85"/>
<ellipse cx="650" cy="470" rx="14" ry="3" fill="#4f806a" filter="url(#bl1)" opacity="0.85" transform="rotate(-45 650 470)"/>
<ellipse cx="660" cy="478" rx="10" ry="3" fill="#4f806a" filter="url(#bl1)" opacity="0.85" transform="rotate(-40 660 478)"/>
<ellipse cx="642" cy="486" rx="12" ry="3.5" fill="#4f806a" filter="url(#bl1)" opacity="0.85" transform="rotate(-55 642 486)"/>
<ellipse cx="636" cy="500" rx="10" ry="3" fill="#4f806a" filter="url(#bl1)" opacity="0.85" transform="rotate(-60 636 500)"/>
<ellipse cx="628" cy="512" rx="7" ry="4" fill="#4f806a" filter="url(#bl1)" opacity="0.85" transform="rotate(-70 628 512)"/>
<ellipse cx="620" cy="508" rx="5" ry="5" fill="#4f806a" filter="url(#bl1)" opacity="0.85"/>
<ellipse cx="672" cy="488" rx="8" ry="3" fill="#4f806a" filter="url(#bl1)" opacity="0.85" transform="rotate(-30 672 488)"/>
<ellipse cx="680" cy="500" rx="6" ry="3" fill="#4f806a" filter="url(#bl1)" opacity="0.85" transform="rotate(-20 680 500)"/>
<ellipse cx="654" cy="504" rx="9" ry="3" fill="#4f806a" filter="url(#bl1)" opacity="0.85" transform="rotate(-40 654 504)"/>
<ellipse cx="646" cy="520" rx="7" ry="3" fill="#4f806a" filter="url(#bl1)" opacity="0.85" transform="rotate(-60 646 520)"/>
<ellipse cx="690" cy="470" rx="4" ry="3" fill="#4f806a" filter="url(#bl1)" opacity="0.85"/>
<path d="M583 476 Q590 496 603 519 Q610 534 631 538" fill="none" stroke="#4a2410" stroke-width="0.9" opacity="1" stroke-linecap="round"/>
<path d="M631 538 Q660 520 688 503 Q694 496 699 492" fill="none" stroke="#4a2410" stroke-width="0.9" opacity="1" stroke-linecap="round"/>
<path d="M633 540 Q620 556 633 567" fill="none" stroke="#4a2410" stroke-width="0.7" opacity="1" stroke-linecap="round"/>
<ellipse cx="590" cy="494" rx="6" ry="3" fill="#eab682" stroke="#4a2410" stroke-width="0.7" transform="rotate(65 590 494)"/>
<ellipse cx="596" cy="508" rx="6" ry="3" fill="#eab682" stroke="#4a2410" stroke-width="0.7" transform="rotate(65 596 508)"/>
<ellipse cx="639" cy="534" rx="6" ry="3" fill="#eab682" stroke="#4a2410" stroke-width="0.7" transform="rotate(-30 639 534)"/>
<ellipse cx="662" cy="520" rx="6" ry="3" fill="#eab682" stroke="#4a2410" stroke-width="0.7" transform="rotate(-30 662 520)"/>
<ellipse cx="686" cy="505" rx="6" ry="3" fill="#eab682" stroke="#4a2410" stroke-width="0.7" transform="rotate(-30 686 505)"/>
<path d="M699 492 L720 500" fill="none" stroke="#4a2410" stroke-width="0.7" opacity="1" stroke-linecap="round"/>
<ellipse cx="582" cy="590" rx="14" ry="60" fill="#f4bc84" filter="url(#bl)" opacity="1"/>
<ellipse cx="606" cy="600" rx="10" ry="40" fill="#d4905e" filter="url(#bl)" opacity="1"/>
<ellipse cx="688" cy="590" rx="24" ry="50" fill="#cc8058" filter="url(#bl)" opacity="1"/>
<ellipse cx="700" cy="612" rx="5" ry="20" fill="#f0bc86" filter="url(#bl2)" opacity="1" transform="rotate(-20 700 612)"/>
<ellipse cx="712" cy="560" rx="8" ry="20" fill="#e6a874" filter="url(#bl)" opacity="1"/>
<ellipse cx="650" cy="575" rx="10" ry="14" fill="#c07450" filter="url(#bl)" opacity="1"/>
<path d="M700 534 Q716 520 718 506" fill="none" stroke="#4a2410" stroke-width="0.7" opacity="0.7" stroke-linecap="round"/>
<path d="M716 575 Q722 590 730 600" fill="none" stroke="#4a2410" stroke-width="0.6" opacity="0.6" stroke-linecap="round"/>
<ellipse cx="588" cy="698" rx="10" ry="14" fill="#f0b880" filter="url(#bl)" opacity="1"/>
<path d="M576 670 Q580 662 590 664 Q598 672 602 676 Q608 672 612 674" fill="none" stroke="#3a1a08" stroke-width="0.8" opacity="0.85" stroke-linecap="round"/>
<path d="M620 624 Q624 638 626 650" fill="none" stroke="#4a2410" stroke-width="0.7" opacity="0.6" stroke-linecap="round"/>
<path d="M574 712 Q578 722 580 730" fill="none" stroke="#4a2410" stroke-width="0.6" opacity="0.5" stroke-linecap="round"/>
<ellipse cx="690" cy="650" rx="22" ry="18" fill="#c27650" filter="url(#bl)" opacity="1"/>
<ellipse cx="730" cy="708" rx="12" ry="14" fill="#f0b880" filter="url(#bl)" opacity="1"/>
<path d="M674 642 Q688 652 698 658 M690 628 Q696 646 698 660 M702 664 Q716 672 742 680 M716 692 Q726 688 734 692 M730 724 Q742 724 746 720 Q750 716 752 712 M754 714 Q766 728 776 740" fill="none" stroke="#3a1a08" stroke-width="0.75" opacity="0.8" stroke-linecap="round"/>
<ellipse cx="574" cy="790" rx="8" ry="40" fill="#cc8058" filter="url(#bl)" opacity="1"/>
<ellipse cx="596" cy="780" rx="8" ry="40" fill="#f4bc84" filter="url(#bl)" opacity="1"/>
<ellipse cx="772" cy="792" rx="8" ry="40" fill="#cc8058" filter="url(#bl)" opacity="1"/>
<ellipse cx="794" cy="790" rx="8" ry="40" fill="#f4bc84" filter="url(#bl)" opacity="1"/>
<ellipse cx="612" cy="680" rx="6" ry="20" fill="#d4905e" filter="url(#bl)" opacity="1"/>
</g>
<path d="M680,144 C685.0,143.8 689.7,145.3 694,147 C698.3,148.7 702.7,151.2 706,154 C709.3,156.8 711.7,160.0 714,164 C716.3,168.0 718.0,172.7 720,178 C722.0,183.3 724.3,190.7 726,196 C727.7,201.3 728.8,205.0 730,210 C731.2,215.0 732.0,220.7 733,226 C734.0,231.3 735.0,238.0 736,242 C737.0,246.0 738.2,246.8 739,250 C739.8,253.2 739.8,257.5 741,261 C742.2,264.5 745.5,268.2 746,271 C746.5,273.8 743.2,276.0 744,278 C744.8,280.0 748.3,280.7 751,283 C753.7,285.3 757.5,288.7 760,292 C762.5,295.3 764.7,299.3 766,303 C767.3,306.7 767.0,307.7 768,314 C769.0,320.3 771.8,333.2 772,341 C772.2,348.8 769.0,354.7 769,361 C769.0,367.3 770.7,371.5 772,379 C773.3,386.5 775.5,397.2 777,406 C778.5,414.8 780.2,421.7 781,432 C781.8,442.3 782.2,457.5 782,468 C781.8,478.5 781.0,485.7 780,495 C779.0,504.3 776.3,513.5 776,524 C775.7,534.5 777.7,549.8 778,558 C778.3,566.2 778.7,568.5 778,573 C777.3,577.5 775.5,582.0 774,585 C772.5,588.0 771.3,589.0 769,591 C766.7,593.0 763.5,595.5 760,597 C756.5,598.5 751.7,598.8 748,600 C744.3,601.2 740.5,604.2 738,604 C735.5,603.8 734.2,602.0 733,599 C731.8,596.0 730.7,591.5 731,586 C731.3,580.5 733.3,572.3 735,566 C736.7,559.7 738.8,553.7 741,548 C743.2,542.3 746.2,537.5 748,532 C749.8,526.5 751.3,522.0 752,515 C752.7,508.0 752.3,500.8 752,490 C751.7,479.2 751.0,461.2 750,450 C749.0,438.8 747.8,431.8 746,423 C744.2,414.2 741.3,406.2 739,397 C736.7,387.8 733.8,372.5 732,368 C730.2,363.5 731.3,365.7 728,370 C724.7,374.3 715.7,386.7 712,394 C708.3,401.3 708.3,407.7 706,414 C703.7,420.3 700.0,426.7 698,432 C696.0,437.3 695.0,440.0 694,446 C693.0,452.0 691.5,461.8 692,468 C692.5,474.2 693.8,478.3 697,483 C700.2,487.7 707.5,492.2 711,496 C714.5,499.8 716.5,501.7 718,506 C719.5,510.3 720.3,516.3 720,522 C719.7,527.7 717.2,533.7 716,540 C714.8,546.3 712.3,552.7 713,560 C713.7,567.3 717.3,575.2 720,584 C722.7,592.8 725.7,605.3 729,613 C732.3,620.7 736.7,622.5 740,630 C743.3,637.5 745.5,648.2 749,658 C752.5,667.8 755.8,679.0 761,689 C766.2,699.0 773.8,709.0 780,718 C786.2,727.0 793.5,733.2 798,743 C802.5,752.8 804.5,766.5 807,777 C809.5,787.5 811.0,791.8 813,806 C815.0,820.2 821.7,852.7 819,862 C816.3,871.3 804.0,869.3 797,862 C790.0,854.7 783.7,830.8 777,818 C770.3,805.2 762.2,795.7 757,785 C751.8,774.3 751.0,763.7 746,754 C741.0,744.3 732.2,735.7 727,727 C721.8,718.3 720.5,709.3 715,702 C709.5,694.7 699.5,690.0 694,683 C688.5,676.0 686.0,668.0 682,660 C678.0,652.0 673.7,641.7 670,635 C666.3,628.3 663.5,626.7 660,620 C656.5,613.3 651.7,600.0 649,595 C646.3,590.0 645.8,589.7 644,590 C642.2,590.3 639.5,592.0 638,597 C636.5,602.0 636.2,612.8 635,620 C633.8,627.2 632.0,633.7 631,640 C630.0,646.3 630.3,649.5 629,658 C627.7,666.5 625.3,680.3 623,691 C620.7,701.7 615.7,710.8 615,722 C614.3,733.2 618.7,748.8 619,758 C619.3,767.2 619.2,770.5 617,777 C614.8,783.5 608.8,790.2 606,797 C603.2,803.8 602.8,807.2 600,818 C597.2,828.8 596.2,854.7 589,862 C581.8,869.3 562.0,873.2 557,862 C552.0,850.8 558.3,813.0 559,795 C559.7,777.0 560.2,764.3 561,754 C561.8,743.7 562.7,741.7 564,733 C565.3,724.3 568.0,714.2 569,702 C570.0,689.8 570.5,670.3 570,660 C569.5,649.7 567.3,646.7 566,640 C564.7,633.3 562.5,629.3 562,620 C561.5,610.7 562.5,595.8 563,584 C563.5,572.2 563.7,560.8 565,549 C566.3,537.2 568.8,523.3 571,513 C573.2,502.7 576.0,492.8 578,487 C580.0,481.2 583.2,480.5 583,478 C582.8,475.5 579.8,473.8 577,472 C574.2,470.2 568.5,470.0 566,467 C563.5,464.0 562.7,459.8 562,454 C561.3,448.2 561.7,439.3 562,432 C562.3,424.7 562.7,417.0 564,410 C565.3,403.0 567.2,396.3 570,390 C572.8,383.7 577.7,376.8 581,372 C584.3,367.2 588.8,365.3 590,361 C591.2,356.7 587.7,351.8 588,346 C588.3,340.2 589.5,332.0 592,326 C594.5,320.0 598.8,314.7 603,310 C607.2,305.3 614.2,300.2 617,298 C619.8,295.8 618.7,298.0 620,297 C621.3,296.0 624.7,294.0 625,292 C625.3,290.0 622.3,287.5 622,285 C621.7,282.5 623.0,280.2 623,277 C623.0,273.8 621.7,269.0 622,266 C622.3,263.0 624.8,262.3 625,259 C625.2,255.7 623.2,251.5 623,246 C622.8,240.5 623.2,232.7 624,226 C624.8,219.3 626.3,212.7 628,206 C629.7,199.3 631.7,192.0 634,186 C636.3,180.0 639.0,174.7 642,170 C645.0,165.3 648.3,161.7 652,158 C655.7,154.3 659.3,150.3 664,148 C668.7,145.7 675.0,144.2 680,144 Z" fill="none" stroke="#241008" stroke-width="1.4"/>
<circle cx="632" cy="288" r="3" fill="#fff"/><circle cx="641" cy="289" r="1.8" fill="#fff"/><ellipse cx="740" cy="278" rx="3" ry="1.8" fill="#fff"/>
<path d="M598 418 Q602 426 601 436 Q597 428 598 418Z" fill="#fff"/>
</g></svg>
<!-- /FIGURE -->
<!-- TOOLBAR BODY -->
<div class="a" style="left:4px;top:67px;width:38px;height:13px;background:linear-gradient(#5a5a5a,#3c3c3c);border-bottom:1px solid #000"></div>
<svg class="a" style="left:8px;top:71px" width="10" height="7"><path d="M0 0l3.5 3-3.5 3zM4 0l3.5 3-3.5 3z" fill="#ddd"/></svg>
<div class="a" style="left:4px;top:80px;width:38px;height:613px;background:#d6d6d6;border-left:1px solid #3c3c3c;border-right:1px solid #3c3c3c;box-shadow:inset 1px 0 0 #f4f4f4, inset -1px 0 0 #eeeeee, inset 0 -1px 0 #f0f0f0"></div>
<svg class="a" style="left:10px;top:84px" width="28" height="3"><rect x="0" y="0" width="1" height="1" fill="#808080"/><rect x="0" y="2" width="1" height="1" fill="#808080"/><rect x="2" y="0" width="1" height="1" fill="#808080"/><rect x="2" y="2" width="1" height="1" fill="#808080"/><rect x="4" y="0" width="1" height="1" fill="#808080"/><rect x="4" y="2" width="1" height="1" fill="#808080"/><rect x="6" y="0" width="1" height="1" fill="#808080"/><rect x="6" y="2" width="1" height="1" fill="#808080"/><rect x="8" y="0" width="1" height="1" fill="#808080"/><rect x="8" y="2" width="1" height="1" fill="#808080"/><rect x="10" y="0" width="1" height="1" fill="#808080"/><rect x="10" y="2" width="1" height="1" fill="#808080"/><rect x="12" y="0" width="1" height="1" fill="#808080"/><rect x="12" y="2" width="1" height="1" fill="#808080"/><rect x="14" y="0" width="1" height="1" fill="#808080"/><rect x="14" y="2" width="1" height="1" fill="#808080"/><rect x="16" y="0" width="1" height="1" fill="#808080"/><rect x="16" y="2" width="1" height="1" fill="#808080"/><rect x="18" y="0" width="1" height="1" fill="#808080"/><rect x="18" y="2" width="1" height="1" fill="#808080"/><rect x="20" y="0" width="1" height="1" fill="#808080"/><rect x="20" y="2" width="1" height="1" fill="#808080"/><rect x="22" y="0" width="1" height="1" fill="#808080"/><rect x="22" y="2" width="1" height="1" fill="#808080"/><rect x="24" y="0" width="1" height="1" fill="#808080"/><rect x="24" y="2" width="1" height="1" fill="#808080"/><rect x="26" y="0" width="1" height="1" fill="#808080"/><rect x="26" y="2" width="1" height="1" fill="#808080"/></svg>
<div class="a" style="left:4px;top:692px;width:38px;height:164px;background:#646464;border:1px solid #3c3c3c;border-top:none"></div>
<div class="a" style="left:8px;top:232px;width:28px;height:1px;background:#a0a0a0;box-shadow:0 1px 0 #f2f2f2"></div>
<div class="a" style="left:8px;top:420px;width:28px;height:1px;background:#a0a0a0;box-shadow:0 1px 0 #f2f2f2"></div>
<div class="a" style="left:8px;top:516px;width:28px;height:1px;background:#a0a0a0;box-shadow:0 1px 0 #f2f2f2"></div>
<svg class="a" style="left:13px;top:95px" width="20" height="18"><path d="M1 1 L10 8 L5 9 L2 13Z" fill="#222"/><path d="M1 1 L2 13 L5 9Z" fill="#888"/><path d="M14 7v10M9 12h10" stroke="#111" stroke-width="1.5"/><path d="M14 6l-2 2.5h4zM14 18l-2-2.5h4zM8 12l2.5-2v4zM20 12l-2.5-2v4z" fill="#111"/></svg>
<svg class="a" style="left:14px;top:119px" width="20" height="18"><rect x="1.5" y="1.5" width="14" height="13" fill="none" stroke="#222" stroke-width="1.4" stroke-dasharray="3 2"/></svg>
<svg class="a" style="left:31px;top:133px" width="3" height="3"><path d="M3 0v3h-3z" fill="#111"/></svg>
<svg class="a" style="left:14px;top:142px" width="20" height="18"><ellipse cx="9.5" cy="6" rx="7.5" ry="4.5" fill="none" stroke="#333" stroke-width="1.4"/><path d="M4 9 Q1 12 4 13 Q6 14 4 16" fill="none" stroke="#333" stroke-width="1.3"/></svg>
<svg class="a" style="left:31px;top:155px" width="3" height="3"><path d="M3 0v3h-3z" fill="#111"/></svg>
<svg class="a" style="left:13px;top:163px" width="20" height="20"><path d="M8 8 L17 17" stroke="#222" stroke-width="2.2"/><path d="M6 2v8M2 6h8M3 3l6 6M9 3l-6 6" stroke="#666" stroke-width="0.9"/></svg>
<svg class="a" style="left:31px;top:178px" width="3" height="3"><path d="M3 0v3h-3z" fill="#111"/></svg>
<svg class="a" style="left:14px;top:188px" width="19" height="19"><path d="M4 0v14h14" fill="none" stroke="#222" stroke-width="2.4"/><path d="M0 4h14v14" fill="none" stroke="#333" stroke-width="2.4"/><path d="M4 14L15 3" stroke="#444" stroke-width="1"/></svg>
<svg class="a" style="left:31px;top:202px" width="3" height="3"><path d="M3 0v3h-3z" fill="#111"/></svg>
<svg class="a" style="left:15px;top:210px" width="18" height="19"><path d="M12 2 Q15 1 16 4 Q16 6 13 8 L11 6Z" fill="#222"/><path d="M11 5 L13 7 L5 15 Q3 17 2 17 Q1 16 3 14Z" fill="#fff" stroke="#222" stroke-width="1.2"/></svg>
<svg class="a" style="left:31px;top:225px" width="3" height="3"><path d="M3 0v3h-3z" fill="#111"/></svg>
<svg class="a" style="left:10px;top:236px" width="24" height="19"><rect x="5" y="5" width="18" height="7" rx="3.5" transform="rotate(-40 14 8.5)" fill="#bbb" stroke="#444" stroke-width="1.2"/><circle cx="7" cy="12" r="5" fill="none" stroke="#333" stroke-width="1" stroke-dasharray="1 1.2"/></svg>
<svg class="a" style="left:31px;top:251px" width="3" height="3"><path d="M3 0v3h-3z" fill="#111"/></svg>
<div class="a" style="left:10px;top:258px;width:25px;height:23px;border:1px solid #4a4a4a;border-radius:3px;background:linear-gradient(#b8b8b8,#cacaca);box-shadow:inset 1px 1px 1px rgba(0,0,0,.3)"></div>
<svg class="a" style="left:15px;top:262px" width="18" height="16"><path d="M15 1 L16.5 2.5 L8 10 L6 8 Z" fill="#444"/><path d="M6 8 L8 10 Q7 14 1 15 Q2 10 6 8Z" fill="#888" stroke="#222" stroke-width="0.8"/></svg>
<svg class="a" style="left:31px;top:277px" width="3" height="3"><path d="M3 0v3h-3z" fill="#111"/></svg>
<svg class="a" style="left:14px;top:283px" width="20" height="18"><circle cx="9" cy="3.5" r="3" fill="#444"/><path d="M8 6h2v3H8z" fill="#444"/><rect x="1.5" y="9.5" width="15" height="6" fill="#fff" stroke="#222" stroke-width="1.3"/><path d="M6 12h6l-3 3z" fill="#222"/><path d="M1 9h16" stroke="#333" stroke-width="2"/></svg>
<svg class="a" style="left:31px;top:297px" width="3" height="3"><path d="M3 0v3h-3z" fill="#111"/></svg>
<svg class="a" style="left:15px;top:306px" width="18" height="17"><path d="M15 1 L16 2 L8 9 L6 7 Z" fill="#333"/><path d="M6 7 L8 9 Q7 13 1 14 Q2 9 6 7Z" fill="#888" stroke="#222" stroke-width="0.8"/><path d="M2 5 Q5 1 9 3" fill="none" stroke="#333" stroke-width="1.2"/><path d="M13 8 Q15 13 11 15" fill="none" stroke="#333" stroke-width="1" stroke-dasharray="1 1"/></svg>
<svg class="a" style="left:31px;top:320px" width="3" height="3"><path d="M3 0v3h-3z" fill="#111"/></svg>
<svg class="a" style="left:14px;top:331px" width="19" height="15"><path d="M1.5 10 L10 2 L17 4 L8.5 12Z" fill="#fff" stroke="#333" stroke-width="1.2"/><path d="M1.5 10 L8.5 12 L8.5 14 L1.5 12Z" fill="#bbb" stroke="#333" stroke-width="1"/></svg>
<svg class="a" style="left:31px;top:343px" width="3" height="3"><path d="M3 0v3h-3z" fill="#111"/></svg>
<svg class="a" style="left:12px;top:352px" width="20" height="19"><path d="M2 8 L9 2 L16 9 L9 16Z" fill="#fff" stroke="#222" stroke-width="1.4"/><path d="M16 9 Q19 13 17 15 Q15 13 16 9Z" fill="#222"/><path d="M4 7 Q4 0 9 2" fill="none" stroke="#333"/></svg>
<svg class="a" style="left:31px;top:366px" width="3" height="3"><path d="M3 0v3h-3z" fill="#111"/></svg>
<svg class="a" style="left:15px;top:375px" width="17" height="17"><path d="M4 15 Q2 12 4 9 L9 4 Q12 2 13 4 L9 8 L14 7 Q15 9 12 10 L8 14 Q6 16 4 15Z" fill="#fff" stroke="#333" stroke-width="1.2"/></svg>
<svg class="a" style="left:31px;top:389px" width="3" height="3"><path d="M3 0v3h-3z" fill="#111"/></svg>
<svg class="a" style="left:13px;top:400px" width="20" height="15"><path d="M2 8 Q2 2 9 2 Q17 3 17 9 Q15 14 8 13 Q2 12 2 8Z" fill="#fff" stroke="#333" stroke-width="1.3"/><ellipse cx="8" cy="8" rx="3" ry="2" fill="none" stroke="#444"/></svg>
<svg class="a" style="left:31px;top:412px" width="3" height="3"><path d="M3 0v3h-3z" fill="#111"/></svg>
<svg class="a" style="left:17px;top:424px" width="12" height="18"><path d="M5.5 1 L10 9 L7.5 14 L3.5 14 L1 9Z" fill="#fff" stroke="#111" stroke-width="1.3"/><path d="M5.5 1v8" stroke="#111"/><circle cx="5.5" cy="9.5" r="1.2" fill="#111"/><path d="M2 16h7" stroke="#111" stroke-width="2"/></svg>
<svg class="a" style="left:31px;top:438px" width="3" height="3"><path d="M3 0v3h-3z" fill="#111"/></svg>
<div class="t" style="left:15px;top:447px;font-family:'Liberation Serif',serif;font-size:19px;line-height:19px;color:#111">T</div>
<svg class="a" style="left:31px;top:462px" width="3" height="3"><path d="M3 0v3h-3z" fill="#111"/></svg>
<svg class="a" style="left:17px;top:472px" width="11" height="16"><path d="M1 1 L9 9 L5.5 9.5 L7.5 14 L6 14.5 L4 10 L1 13Z" fill="#fff" stroke="#111" stroke-width="1.3"/></svg>
<svg class="a" style="left:31px;top:485px" width="3" height="3"><path d="M3 0v3h-3z" fill="#111"/></svg>
<svg class="a" style="left:15px;top:494px" width="16" height="17"><ellipse cx="7.5" cy="8" rx="7" ry="6.5" fill="#bbb" stroke="#555"/><ellipse cx="6" cy="6" rx="4" ry="3" fill="#eee"/></svg>
<svg class="a" style="left:31px;top:508px" width="3" height="3"><path d="M3 0v3h-3z" fill="#111"/></svg>
<svg class="a" style="left:12px;top:521px" width="22" height="20"><circle cx="12" cy="5" r="4" fill="#ccc" stroke="#555"/><path d="M3 10 Q0 14 6 16 Q14 18 19 13" fill="none" stroke="#111" stroke-width="1.6"/><path d="M4 8 L2 12 L6 12Z" fill="#111"/></svg>
<svg class="a" style="left:31px;top:537px" width="3" height="3"><path d="M3 0v3h-3z" fill="#111"/></svg>
<svg class="a" style="left:11px;top:544px" width="24" height="20"><rect x="15" y="1" width="6" height="5" fill="#777"/><path d="M3 9 Q0 14 7 16 Q16 18 21 12 Q22 8 15 8" fill="none" stroke="#111" stroke-width="1.6"/><path d="M8 14 L5 17 L10 17Z" fill="#111"/></svg>
<svg class="a" style="left:31px;top:559px" width="3" height="3"><path d="M3 0v3h-3z" fill="#111"/></svg>
<svg class="a" style="left:13px;top:566px" width="19" height="19"><path d="M4 10 L3 5 Q4 3 5.5 5 L6.5 9 L6 3 Q7 1 8.5 3 L9 9 L9.5 2 Q11 1 12 2.5 L12 9 L13 4 Q14.5 3 15 5 L15 12 L16.5 10 Q18.5 10 17.5 12.5 L14 17.5 L7 17.5 Z" fill="#fff" stroke="#111" stroke-width="1.2"/></svg>
<svg class="a" style="left:31px;top:581px" width="3" height="3"><path d="M3 0v3h-3z" fill="#111"/></svg>
<svg class="a" style="left:13px;top:588px" width="19" height="19"><circle cx="7" cy="7" r="5.5" fill="#eee" stroke="#222" stroke-width="1.6"/><path d="M11 11 L17 17" stroke="#111" stroke-width="2.6"/></svg>
<svg class="a" style="left:8px;top:612px" width="12" height="13"><rect x="4" y="4" width="7" height="7" fill="#fff" stroke="#333"/><rect x="1" y="1" width="7" height="7" fill="#111"/></svg>
<svg class="a" style="left:25px;top:612px" width="12" height="14"><path d="M3 4 Q3 9 9 10" fill="none" stroke="#111" stroke-width="1.4"/><path d="M0 5l3-4 3 4zM8 7l4 3-4 3z" fill="#111"/></svg>
<div class="a" style="left:18px;top:640px;width:20px;height:20px;background:#000;border:1px solid #fff;outline:1px solid #888"></div>
<div class="a" style="left:8px;top:629px;width:21px;height:21px;background:#7a3008;border:1px solid #fff;outline:1px solid #888"></div>
<div class="a" style="left:14px;top:667px;width:17px;height:14px;background:#fff;border:1px solid #555"></div>
<div class="a" style="left:18px;top:669px;width:9px;height:9px;border:1.3px solid #333;border-radius:50%;background:#fff"></div>
<!-- PANELS -->
<div class="a" style="left:44px;top:90px;width:238px;height:714px;background:#d6d6d6;border:1px solid #2e2e2e;border-top:none"></div>
<div class="a" style="left:44px;top:90px;width:238px;height:13px;background:linear-gradient(#5e5e5e,#383838);border-top:1px solid #1e1e1e;border-bottom:1px solid #111;border-radius:3px 3px 0 0"></div>
<svg class="a" style="left:255px;top:94px" width="22" height="7"><path d="M4 0v6l-4-3zM9 0v6l-4-3z" fill="#ddd"/><path d="M12.5 -1v9" stroke="#6a6a6a"/></svg>
<svg class="a" style="left:272px;top:93px" width="8" height="8"><path d="M1 1l6 6M7 1l-6 6" stroke="#eee" stroke-width="1.5"/></svg>
<div class="a" style="left:45px;top:103px;width:236px;height:17px;background:linear-gradient(#9c9c9c,#888)"></div>
<div class="a" style="left:45px;top:103px;width:73px;height:17px;background:linear-gradient(#e4e4e4,#d6d6d6)"></div>
<div class="t" style="left:52px;top:106px;font-size:10px;color:#333a4a;font-weight:bold;letter-spacing:0.18px">NAVIGATOR</div>
<div class="a" style="left:119px;top:103px;width:74px;height:17px;background:linear-gradient(#a2a2a2,#8e8e8e);border-right:1px solid #6e6e6e;border-left:1px solid #b4b4b4"></div>
<div class="t" style="left:126px;top:106px;font-size:10px;color:#3a3a3a;font-weight:bold;letter-spacing:0px">HISTOGRAM</div>
<div class="a" style="left:194px;top:103px;width:37px;height:17px;background:linear-gradient(#a2a2a2,#8e8e8e);border-right:1px solid #6e6e6e;border-left:1px solid #b4b4b4"></div>
<div class="t" style="left:201px;top:106px;font-size:10px;color:#3a3a3a;font-weight:bold;letter-spacing:-0.2px">INFO</div>
<svg class="a" style="left:263px;top:108px" width="16" height="12"><path d="M0 3h5l-2.5 3z" fill="#222"/><path d="M6 1.5h8M6 4.5h8M6 7.5h8" stroke="#222" stroke-width="1"/></svg>
<div class="a" style="left:135px;top:125px;width:55px;height:72px;background:#fff;border:1px solid #a8a8a8"></div>
<svg class="a" style="left:136px;top:126px" width="54" height="70"><g transform="translate(1,2) scale(0.0638) translate(-261,-88)"><path d="M680,144 C685.0,143.8 689.7,145.3 694,147 C698.3,148.7 702.7,151.2 706,154 C709.3,156.8 711.7,160.0 714,164 C716.3,168.0 718.0,172.7 720,178 C722.0,183.3 724.3,190.7 726,196 C727.7,201.3 728.8,205.0 730,210 C731.2,215.0 732.0,220.7 733,226 C734.0,231.3 735.0,238.0 736,242 C737.0,246.0 738.2,246.8 739,250 C739.8,253.2 739.8,257.5 741,261 C742.2,264.5 745.5,268.2 746,271 C746.5,273.8 743.2,276.0 744,278 C744.8,280.0 748.3,280.7 751,283 C753.7,285.3 757.5,288.7 760,292 C762.5,295.3 764.7,299.3 766,303 C767.3,306.7 767.0,307.7 768,314 C769.0,320.3 771.8,333.2 772,341 C772.2,348.8 769.0,354.7 769,361 C769.0,367.3 770.7,371.5 772,379 C773.3,386.5 775.5,397.2 777,406 C778.5,414.8 780.0,421.7 781,432 C782.0,442.3 782.8,457.5 783,468 C783.2,478.5 782.7,485.7 782,495 C781.3,504.3 779.7,513.2 779,524 C778.3,534.8 778.2,551.8 778,560 C777.8,568.2 778.7,568.8 778,573 C777.3,577.2 775.5,582.0 774,585 C772.5,588.0 771.3,589.0 769,591 C766.7,593.0 763.5,595.5 760,597 C756.5,598.5 751.7,598.8 748,600 C744.3,601.2 740.5,604.2 738,604 C735.5,603.8 734.2,602.0 733,599 C731.8,596.0 730.7,591.5 731,586 C731.3,580.5 733.5,572.5 735,566 C736.5,559.5 738.3,552.7 740,547 C741.7,541.3 743.3,537.3 745,532 C746.7,526.7 748.8,522.0 750,515 C751.2,508.0 752.0,500.8 752,490 C752.0,479.2 751.0,461.2 750,450 C749.0,438.8 747.8,431.8 746,423 C744.2,414.2 741.3,406.2 739,397 C736.7,387.8 733.8,372.5 732,368 C730.2,363.5 731.3,365.7 728,370 C724.7,374.3 715.7,386.7 712,394 C708.3,401.3 708.3,407.7 706,414 C703.7,420.3 700.0,426.7 698,432 C696.0,437.3 695.0,440.0 694,446 C693.0,452.0 691.5,461.8 692,468 C692.5,474.2 693.8,478.3 697,483 C700.2,487.7 707.5,492.2 711,496 C714.5,499.8 716.5,501.7 718,506 C719.5,510.3 720.3,516.3 720,522 C719.7,527.7 717.2,533.7 716,540 C714.8,546.3 712.3,552.7 713,560 C713.7,567.3 717.3,575.2 720,584 C722.7,592.8 725.7,605.3 729,613 C732.3,620.7 736.7,622.5 740,630 C743.3,637.5 745.5,648.2 749,658 C752.5,667.8 755.8,679.0 761,689 C766.2,699.0 773.8,709.0 780,718 C786.2,727.0 793.5,733.2 798,743 C802.5,752.8 804.5,766.5 807,777 C809.5,787.5 811.3,795.2 813,806 C814.7,816.8 821.5,836.0 817,842 C812.5,848.0 793.3,846.3 786,842 C778.7,837.7 777.8,825.5 773,816 C768.2,806.5 761.5,795.3 757,785 C752.5,774.7 751.0,763.7 746,754 C741.0,744.3 732.2,735.7 727,727 C721.8,718.3 720.5,709.3 715,702 C709.5,694.7 699.5,690.0 694,683 C688.5,676.0 686.0,668.0 682,660 C678.0,652.0 673.7,641.7 670,635 C666.3,628.3 663.5,626.7 660,620 C656.5,613.3 651.7,600.0 649,595 C646.3,590.0 645.8,589.7 644,590 C642.2,590.3 639.5,592.0 638,597 C636.5,602.0 636.2,612.8 635,620 C633.8,627.2 632.0,633.7 631,640 C630.0,646.3 630.3,649.5 629,658 C627.7,666.5 625.3,680.3 623,691 C620.7,701.7 615.7,710.8 615,722 C614.3,733.2 618.7,748.8 619,758 C619.3,767.2 619.0,770.8 617,777 C615.0,783.2 610.2,788.2 607,795 C603.8,801.8 600.0,810.2 598,818 C596.0,825.8 601.7,838.0 595,842 C588.3,846.0 564.0,849.8 558,842 C552.0,834.2 558.5,809.7 559,795 C559.5,780.3 560.2,764.3 561,754 C561.8,743.7 562.7,741.7 564,733 C565.3,724.3 568.0,714.2 569,702 C570.0,689.8 570.5,670.3 570,660 C569.5,649.7 567.3,646.7 566,640 C564.7,633.3 562.5,629.3 562,620 C561.5,610.7 562.5,595.8 563,584 C563.5,572.2 563.7,560.8 565,549 C566.3,537.2 568.8,523.3 571,513 C573.2,502.7 576.0,492.8 578,487 C580.0,481.2 583.2,480.5 583,478 C582.8,475.5 579.8,473.8 577,472 C574.2,470.2 568.5,470.0 566,467 C563.5,464.0 562.7,459.8 562,454 C561.3,448.2 561.7,439.3 562,432 C562.3,424.7 562.7,417.0 564,410 C565.3,403.0 567.2,396.3 570,390 C572.8,383.7 577.7,376.8 581,372 C584.3,367.2 588.8,365.3 590,361 C591.2,356.7 587.7,351.8 588,346 C588.3,340.2 589.5,332.0 592,326 C594.5,320.0 598.8,314.7 603,310 C607.2,305.3 614.2,300.2 617,298 C619.8,295.8 618.7,298.0 620,297 C621.3,296.0 624.7,294.0 625,292 C625.3,290.0 622.3,287.5 622,285 C621.7,282.5 623.0,280.2 623,277 C623.0,273.8 621.7,269.0 622,266 C622.3,263.0 624.8,262.3 625,259 C625.2,255.7 623.2,251.5 623,246 C622.8,240.5 623.2,232.7 624,226 C624.8,219.3 626.3,212.7 628,206 C629.7,199.3 631.7,192.0 634,186 C636.3,180.0 639.0,174.7 642,170 C645.0,165.3 648.3,161.7 652,158 C655.7,154.3 659.3,150.3 664,148 C668.7,145.7 675.0,144.2 680,144 Z" fill="#d8965e" stroke="#5a2a10" stroke-width="14"/><path d="M558 838 L595 838 L588 930 L570 935 Z M786 838 L817 838 L835 930 L812 935 Z" fill="#d8965e" stroke="#5a2a10" stroke-width="14"/></g></svg>
<div class="a" style="left:137px;top:128px;width:52px;height:48px;border:2px solid #f03a3a"></div>
<div class="a" style="left:48px;top:201px;width:216px;height:1px;background:#a4a4a4;box-shadow:0 1px 0 #ececec"></div>
<div class="a" style="left:48px;top:203px;width:58px;height:14px;background:#fff;border:1px solid #e0e0e0"></div>
<div class="t" style="left:52px;top:204px;font-size:10.5px;color:#111;font-weight:normal;">33.33%</div>
<svg class="a" style="left:140px;top:207px" width="12" height="8"><path d="M0.5 7 L4 3 L6 5 L8 2 L11.5 7Z" fill="none" stroke="#333" stroke-width="1"/><path d="M0 7h12" stroke="#333" stroke-width="1.5"/></svg>
<div class="a" style="left:162px;top:209px;width:74px;height:4px;background:linear-gradient(#cfcfcf,#f4f4f4);border:1px solid #bdbdbd;border-radius:2px"></div>
<svg class="a" style="left:188px;top:204px" width="9" height="13"><path d="M1 12V5L4.5 1L8 5V12Z" fill="#eee" stroke="#777"/></svg>
<svg class="a" style="left:243px;top:205px" width="19" height="10"><path d="M0.5 9 L6 3 L9 6 L12 1 L18.5 9Z" fill="none" stroke="#333" stroke-width="1.2"/><path d="M0 9h19" stroke="#333" stroke-width="1.6"/></svg>
<div class="a" style="left:268px;top:205px;width:11px;height:11px;background-image:radial-gradient(circle,#8a8a8a 0.7px,transparent 0.9px);background-size:3px 3px;clip-path:polygon(100% 0,100% 100%,0 100%)"></div>
<div class="a" style="left:45px;top:218px;width:236px;height:3px;background:#343434"></div>
<div class="a" style="left:45px;top:221px;width:236px;height:17px;background:linear-gradient(#9c9c9c,#888)"></div>
<div class="a" style="left:45px;top:221px;width:58px;height:17px;background:linear-gradient(#e4e4e4,#d6d6d6)"></div>
<div class="t" style="left:52px;top:224px;font-size:10px;color:#333a4a;font-weight:bold;letter-spacing:-0.7px">BRUSHES</div>
<svg class="a" style="left:263px;top:226px" width="16" height="12"><path d="M0 3h5l-2.5 3z" fill="#222"/><path d="M6 1.5h8M6 4.5h8M6 7.5h8" stroke="#222" stroke-width="1"/></svg>
<div class="a" style="left:48px;top:241px;width:229px;height:151px;background:#fff;border-right:1px solid #e4e4e4"></div>
<div class="a" style="left:49px;top:241px;width:33px;height:33px;border:1px solid #000;background:#fff"></div>
<div class="t" style="left:49px;top:261px;width:33px;text-align:center;font-size:10px;color:#111">3</div>
<div class="a" style="left:81px;top:241px;width:33px;height:33px;border:1px solid #000;background:#fff"></div>
<div class="t" style="left:81px;top:261px;width:33px;text-align:center;font-size:10px;color:#111">9</div>
<div class="a" style="left:113px;top:241px;width:33px;height:33px;border:1px solid #000;background:#fff"></div>
<div class="t" style="left:113px;top:261px;width:33px;text-align:center;font-size:10px;color:#111">434</div>
<div class="a" style="left:145px;top:241px;width:33px;height:33px;border:1px solid #000;background:#fff"></div>
<div class="t" style="left:145px;top:261px;width:33px;text-align:center;font-size:10px;color:#111">949</div>
<div class="a" style="left:177px;top:241px;width:33px;height:33px;border:1px solid #000;background:#fff"></div>
<div class="t" style="left:177px;top:261px;width:33px;text-align:center;font-size:10px;color:#111">323</div>
<div class="a" style="left:209px;top:241px;width:33px;height:33px;border:1px solid #000;background:#fff"></div>
<div class="t" style="left:209px;top:261px;width:33px;text-align:center;font-size:10px;color:#111">1850</div>
<div class="a" style="left:49px;top:273px;width:33px;height:33px;border:1px solid #000;background:#fff"></div>
<div class="t" style="left:49px;top:293px;width:33px;text-align:center;font-size:10px;color:#111">1569</div>
<div class="a" style="left:81px;top:273px;width:33px;height:33px;border:1px solid #000;background:#fff"></div>
<div class="t" style="left:81px;top:293px;width:33px;text-align:center;font-size:10px;color:#111">1940</div>
<div class="a" style="left:113px;top:273px;width:33px;height:33px;border:1px solid #000;background:#fff"></div>
<div class="t" style="left:113px;top:293px;width:33px;text-align:center;font-size:10px;color:#111">1896</div>
<div class="a" style="left:145px;top:273px;width:33px;height:33px;border:1px solid #000;background:#fff"></div>
<div class="t" style="left:145px;top:293px;width:33px;text-align:center;font-size:10px;color:#111">900</div>
<div class="a" style="left:177px;top:273px;width:33px;height:33px;border:1px solid #000;background:#fff"></div>
<div class="t" style="left:177px;top:293px;width:33px;text-align:center;font-size:10px;color:#111">804</div>
<div class="a" style="left:209px;top:273px;width:33px;height:33px;border:1px solid #000;background:#fff"></div>
<div class="t" style="left:209px;top:293px;width:33px;text-align:center;font-size:10px;color:#111">1254</div>
<div class="a" style="left:49px;top:305px;width:33px;height:33px;border:1px solid #000;background:#fff"></div>
<div class="t" style="left:49px;top:325px;width:33px;text-align:center;font-size:10px;color:#111">700</div>
<div class="a" style="left:81px;top:305px;width:33px;height:33px;border:1px solid #000;background:#fff"></div>
<div class="t" style="left:81px;top:325px;width:33px;text-align:center;font-size:10px;color:#111">300</div>
<div class="a" style="left:113px;top:305px;width:33px;height:33px;border:1px solid #000;background:#fff"></div>
<div class="t" style="left:113px;top:325px;width:33px;text-align:center;font-size:10px;color:#111">200</div>
<div class="a" style="left:145px;top:305px;width:33px;height:33px;border:1px solid #000;background:#fff"></div>
<div class="t" style="left:145px;top:325px;width:33px;text-align:center;font-size:10px;color:#111">150</div>
<div class="a" style="left:177px;top:305px;width:33px;height:33px;border:1px solid #000;background:#fff"></div>
<div class="t" style="left:177px;top:325px;width:33px;text-align:center;font-size:10px;color:#111">250</div>
<div class="a" style="left:209px;top:305px;width:33px;height:33px;border:1px solid #000;background:#fff"></div>
<div class="t" style="left:209px;top:325px;width:33px;text-align:center;font-size:10px;color:#111">696</div>
<div class="a" style="left:49px;top:337px;width:33px;height:33px;border:1px solid #000;background:#fff"></div>
<div class="t" style="left:49px;top:357px;width:33px;text-align:center;font-size:10px;color:#111">500</div>
<svg class="a" style="left:0px;top:0px" width="1" height="1"><defs><filter id="rgh" x="-30%" y="-30%" width="160%" height="160%"><feTurbulence type="fractalNoise" baseFrequency="0.45" numOctaves="2" seed="3" result="n"/><feDisplacementMap in="SourceGraphic" in2="n" scale="6"/></filter><filter id="sft" x="-50%" y="-50%" width="200%" height="200%"><feGaussianBlur stdDeviation="1.6"/></filter><filter id="spk" x="-30%" y="-30%" width="160%" height="160%"><feTurbulence type="fractalNoise" baseFrequency="0.9" numOctaves="1" seed="7" result="n"/><feColorMatrix in="n" type="matrix" values="0 0 0 0 0  0 0 0 0 0  0 0 0 0 0  0 0 0 -2.2 1.5" result="m"/><feComposite in="SourceGraphic" in2="m" operator="in" result="c"/><feDisplacementMap in="c" in2="n" scale="5"/></filter></defs></svg>
<svg class="a" style="left:50px;top:242px" width="31" height="20"><circle cx="15.5" cy="11" r="0.8" fill="#333"/></svg>
<svg class="a" style="left:82px;top:242px" width="31" height="20"><circle cx="15.5" cy="11" r="3" fill="#000"/></svg>
<svg class="a" style="left:114px;top:242px" width="31" height="20"><ellipse cx="9.5" cy="14" rx="4.5" ry="4" fill="#111"/><ellipse cx="18" cy="5.5" rx="4" ry="3.5" fill="#111"/><ellipse cx="20.5" cy="17" rx="4" ry="3.5" fill="#111"/></svg>
<svg class="a" style="left:146px;top:242px" width="31" height="20"><rect x="5" y="0" width="21" height="20" fill="#b8b8b8"/><rect x="6" y="1" width="19" height="18" fill="#d8d8d8"/><path d="M11 3 Q15 1 17 5 L18 9 Q21 12 22 18 L10 18 Q11 12 12 9Z" fill="#222"/><rect x="13" y="11" width="5" height="4" fill="#eee"/><circle cx="14" cy="4" r="2.2" fill="#eee"/></svg>
<svg class="a" style="left:178px;top:242px" width="31" height="20"><ellipse cx="20" cy="9" rx="3" ry="2.5" fill="none" stroke="#444" stroke-width="0.8"/><ellipse cx="18" cy="4" rx="1.5" ry="3" fill="none" stroke="#444" stroke-width="0.8"/><path d="M4 16 L17 8 M10 20 L17 1" stroke="#444" stroke-width="0.8"/></svg>
<svg class="a" style="left:210px;top:242px" width="31" height="20"><g filter="url(#rgh)"><path d="M12 4 Q16 1 19 5 Q22 8 18 11 Q20 15 15 16 Q12 17 10 15 Q8 12 11 10 Q9 6 12 4Z" fill="#333"/></g></svg>
<svg class="a" style="left:50px;top:274px" width="31" height="20"><g filter="url(#rgh)"><path d="M4 8 Q8 2 14 5 Q20 1 25 6 Q29 10 24 14 Q20 19 14 15 Q8 18 6 13 Q2 11 4 8Z" fill="#222"/></g><circle cx="18" cy="13" r="3" fill="#999"/></svg>
<svg class="a" style="left:82px;top:274px" width="31" height="20"><g filter="url(#rgh)"><path d="M6 4 Q10 6 9 12 Q12 16 8 17 Q4 14 6 4Z" fill="#222"/><circle cx="14" cy="12" r="3" fill="#bbb"/></g><circle cx="22" cy="4" r="1" fill="#333"/></svg>
<svg class="a" style="left:114px;top:274px" width="31" height="20"><g filter="url(#spk)"><path d="M6 6 Q14 0 22 6 Q28 12 20 16 Q12 19 8 14 Q3 10 6 6Z" fill="#666"/></g></svg>
<svg class="a" style="left:146px;top:274px" width="31" height="20"><g filter="url(#rgh)"><path d="M10 3 Q16 0 20 4 Q24 9 21 14 Q18 19 12 17 Q6 15 8 10 Q7 5 10 3Z" fill="#333"/></g></svg>
<svg class="a" style="left:178px;top:274px" width="31" height="20"><g filter="url(#rgh)"><path d="M9 4 Q13 1 18 6 Q24 10 22 16 Q16 20 10 16 Q5 11 9 4Z" fill="#2a2a2a"/></g><circle cx="9" cy="6" r="2" fill="#fff"/></svg>
<svg class="a" style="left:210px;top:274px" width="31" height="20"><g filter="url(#sft)"><path d="M8 6 Q14 1 20 5 Q26 10 22 15 Q16 19 10 15 Q5 11 8 6Z" fill="#555"/></g><g filter="url(#rgh)"><circle cx="14" cy="9" r="4" fill="#222"/></g></svg>
<svg class="a" style="left:50px;top:306px" width="31" height="20"><g filter="url(#spk)"><path d="M6 15 L14 8 L24 4 M10 6 L18 14 L26 16 M12 18 L17 3" stroke="#666" stroke-width="1.6" fill="none"/></g></svg>
<svg class="a" style="left:82px;top:306px" width="31" height="20"><g filter="url(#spk)"><path d="M7 6 Q14 0 24 5 Q26 11 19 14 Q12 16 8 11Z" fill="#555"/></g></svg>
<svg class="a" style="left:114px;top:306px" width="31" height="20"><ellipse cx="15.5" cy="11" rx="6" ry="2.4" fill="#111" filter="url(#sft)"/></svg>
<svg class="a" style="left:146px;top:306px" width="31" height="20"><ellipse cx="15.5" cy="11" rx="7.5" ry="3" fill="#000"/></svg>
<svg class="a" style="left:178px;top:306px" width="31" height="20"><ellipse cx="15.5" cy="11" rx="6" ry="2.2" fill="#111" filter="url(#sft)"/></svg>
<svg class="a" style="left:210px;top:306px" width="31" height="20"><g filter="url(#rgh)"><path d="M6 5 Q14 -1 24 4 Q30 10 25 17 Q16 22 8 17 Q2 11 6 5Z" fill="#151515"/></g></svg>
<svg class="a" style="left:50px;top:338px" width="31" height="20"><g filter="url(#rgh)"><path d="M6 5 Q14 -1 24 4 Q30 10 25 17 Q16 22 8 17 Q2 11 6 5Z" fill="#151515"/></g></svg>
<div class="a" style="left:262px;top:242px;width:15px;height:134px;background:#f0f0f0"></div>
<svg class="a" style="left:265px;top:248px" width="9" height="6"><path d="M0.5 5 L4.5 1 L8.5 5Z" fill="#444"/></svg>
<svg class="a" style="left:265px;top:364px" width="9" height="6"><path d="M0.5 1 L4.5 5 L8.5 1Z" fill="#444"/></svg>
<div class="a" style="left:263px;top:259px;width:12px;height:98px;background:linear-gradient(90deg,#f4f4f4,#d8d8d8);border:1px solid #a8a8a8;border-radius:2px"></div>
<svg class="a" style="left:265px;top:303px" width="8" height="8"><path d="M1 1h6M1 3.5h6M1 6h6" stroke="#555"/></svg>
<div class="a" style="left:49px;top:376px;width:213px;height:15px;background:#f0f0f0"></div>
<svg class="a" style="left:55px;top:379px" width="7" height="9"><path d="M5 0.5 L1 4.5 L5 8.5Z" fill="#444"/></svg>
<svg class="a" style="left:250px;top:379px" width="7" height="9"><path d="M1 0.5 L5 4.5 L1 8.5Z" fill="#444"/></svg>
<div class="a" style="left:67px;top:377px;width:174px;height:12px;background:linear-gradient(#f4f4f4,#d4d4d4);border:1px solid #a8a8a8;border-radius:2px"></div>
<svg class="a" style="left:150px;top:379px" width="8" height="8"><path d="M1 1v6M3.5 1v6M6 1v6" stroke="#555"/></svg>
<div class="a" style="left:48px;top:392px;width:216px;height:1px;background:#a4a4a4;box-shadow:0 1px 0 #eee"></div>
<svg class="a" style="left:218px;top:396px" width="14" height="13"><rect x="1.5" y="3.5" width="9" height="8" fill="#fff" stroke="#333"/><path d="M4 3.5V1.5h9v8h-2.5" fill="none" stroke="#333"/><rect x="6" y="6" width="3" height="3" fill="#333"/></svg>
<svg class="a" style="left:245px;top:395px" width="13" height="13"><path d="M2 3h9M4 3V1h5v2" stroke="#555" fill="none"/><path d="M3 4h7l-1 8H4z" fill="#eee" stroke="#555"/><path d="M5 5v6M6.5 5v6M8 5v6" stroke="#777"/></svg>
<div class="a" style="left:268px;top:397px;width:11px;height:11px;background-image:radial-gradient(circle,#8a8a8a 0.7px,transparent 0.9px);background-size:3px 3px;clip-path:polygon(100% 0,100% 100%,0 100%)"></div>
<div class="a" style="left:45px;top:411px;width:236px;height:3px;background:#343434"></div>
<div class="a" style="left:45px;top:414px;width:236px;height:17px;background:linear-gradient(#9c9c9c,#888)"></div>
<div class="a" style="left:45px;top:414px;width:67px;height:17px;background:linear-gradient(#e4e4e4,#d6d6d6)"></div>
<div class="t" style="left:52px;top:417px;font-size:10px;color:#333a4a;font-weight:bold;letter-spacing:-0.36px">SWATCHES</div>
<svg class="a" style="left:263px;top:419px" width="16" height="12"><path d="M0 3h5l-2.5 3z" fill="#222"/><path d="M6 1.5h8M6 4.5h8M6 7.5h8" stroke="#222" stroke-width="1"/></svg>
<div class="a" style="left:47px;top:432px;width:217px;height:97px;background:#d2d2d2"></div>
<div class="a" style="left:47px;top:432px;width:217px;height:13px;background:#000"></div>
<div class="a" style="left:47px;top:444px;width:217px;height:13px;background:#000"></div>
<div class="a" style="left:47px;top:456px;width:217px;height:13px;background:#000"></div>
<div class="a" style="left:47px;top:468px;width:217px;height:13px;background:#000"></div>
<div class="a" style="left:47px;top:480px;width:217px;height:13px;background:#000"></div>
<div class="a" style="left:47px;top:492px;width:217px;height:13px;background:#000"></div>
<div class="a" style="left:47px;top:504px;width:217px;height:13px;background:#000"></div>
<div class="a" style="left:47px;top:516px;width:133px;height:13px;background:#000"></div>
<svg class="a" style="left:47px;top:432px" width="217" height="97"><rect x="1" y="1" width="11" height="11" fill="#ff0000"/><rect x="13" y="1" width="11" height="11" fill="#ffff00"/><rect x="25" y="1" width="11" height="11" fill="#00ff00"/><rect x="37" y="1" width="11" height="11" fill="#00ffff"/><rect x="49" y="1" width="11" height="11" fill="#0000ff"/><rect x="61" y="1" width="11" height="11" fill="#ff00ff"/><rect x="73" y="1" width="11" height="11" fill="#ffffff"/><rect x="85" y="1" width="11" height="11" fill="#ebebeb"/><rect x="97" y="1" width="11" height="11" fill="#e1e1e1"/><rect x="109" y="1" width="11" height="11" fill="#d7d7d7"/><rect x="121" y="1" width="11" height="11" fill="#cccccc"/><rect x="133" y="1" width="11" height="11" fill="#c2c2c2"/><rect x="145" y="1" width="11" height="11" fill="#b7b7b7"/><rect x="157" y="1" width="11" height="11" fill="#acacac"/><rect x="169" y="1" width="11" height="11" fill="#a0a0a0"/><rect x="181" y="1" width="11" height="11" fill="#959595"/><rect x="193" y="1" width="11" height="11" fill="#ee1d24"/><rect x="205" y="1" width="11" height="11" fill="#fff100"/><rect x="1" y="13" width="11" height="11" fill="#00a650"/><rect x="13" y="13" width="11" height="11" fill="#00aeef"/><rect x="25" y="13" width="11" height="11" fill="#2f3192"/><rect x="37" y="13" width="11" height="11" fill="#ed008c"/><rect x="49" y="13" width="11" height="11" fill="#898989"/><rect x="61" y="13" width="11" height="11" fill="#7d7d7d"/><rect x="73" y="13" width="11" height="11" fill="#707070"/><rect x="85" y="13" width="11" height="11" fill="#626262"/><rect x="97" y="13" width="11" height="11" fill="#555555"/><rect x="109" y="13" width="11" height="11" fill="#464646"/><rect x="121" y="13" width="11" height="11" fill="#363636"/><rect x="133" y="13" width="11" height="11" fill="#262626"/><rect x="145" y="13" width="11" height="11" fill="#111111"/><rect x="157" y="13" width="11" height="11" fill="#000000"/><rect x="169" y="13" width="11" height="11" fill="#f7977a"/><rect x="181" y="13" width="11" height="11" fill="#fbad82"/><rect x="193" y="13" width="11" height="11" fill="#fdc68c"/><rect x="205" y="13" width="11" height="11" fill="#fff799"/><rect x="1" y="25" width="11" height="11" fill="#c6df9c"/><rect x="13" y="25" width="11" height="11" fill="#a4d49d"/><rect x="25" y="25" width="11" height="11" fill="#81ca9d"/><rect x="37" y="25" width="11" height="11" fill="#7bcdc9"/><rect x="49" y="25" width="11" height="11" fill="#6ccff7"/><rect x="61" y="25" width="11" height="11" fill="#7ca6d8"/><rect x="73" y="25" width="11" height="11" fill="#8293ca"/><rect x="85" y="25" width="11" height="11" fill="#8881be"/><rect x="97" y="25" width="11" height="11" fill="#a286bd"/><rect x="109" y="25" width="11" height="11" fill="#bc8cbf"/><rect x="121" y="25" width="11" height="11" fill="#f49bc1"/><rect x="133" y="25" width="11" height="11" fill="#f5999d"/><rect x="145" y="25" width="11" height="11" fill="#f16c4d"/><rect x="157" y="25" width="11" height="11" fill="#f68e54"/><rect x="169" y="25" width="11" height="11" fill="#fbaf5a"/><rect x="181" y="25" width="11" height="11" fill="#fff467"/><rect x="193" y="25" width="11" height="11" fill="#acd372"/><rect x="205" y="25" width="11" height="11" fill="#7dc473"/><rect x="1" y="37" width="11" height="11" fill="#39b778"/><rect x="13" y="37" width="11" height="11" fill="#17bcb4"/><rect x="25" y="37" width="11" height="11" fill="#00bff3"/><rect x="37" y="37" width="11" height="11" fill="#438ccb"/><rect x="49" y="37" width="11" height="11" fill="#5573b7"/><rect x="61" y="37" width="11" height="11" fill="#5e5ca7"/><rect x="73" y="37" width="11" height="11" fill="#855fa8"/><rect x="85" y="37" width="11" height="11" fill="#a763a9"/><rect x="97" y="37" width="11" height="11" fill="#ef6ea8"/><rect x="109" y="37" width="11" height="11" fill="#f16d7e"/><rect x="121" y="37" width="11" height="11" fill="#ee1d24"/><rect x="133" y="37" width="11" height="11" fill="#f16522"/><rect x="145" y="37" width="11" height="11" fill="#f7941d"/><rect x="157" y="37" width="11" height="11" fill="#fff100"/><rect x="169" y="37" width="11" height="11" fill="#8fc63d"/><rect x="181" y="37" width="11" height="11" fill="#37b44a"/><rect x="193" y="37" width="11" height="11" fill="#00a650"/><rect x="205" y="37" width="11" height="11" fill="#00a99e"/><rect x="1" y="49" width="11" height="11" fill="#00aeef"/><rect x="13" y="49" width="11" height="11" fill="#0072bc"/><rect x="25" y="49" width="11" height="11" fill="#0054a5"/><rect x="37" y="49" width="11" height="11" fill="#2f3192"/><rect x="49" y="49" width="11" height="11" fill="#652c91"/><rect x="61" y="49" width="11" height="11" fill="#91278f"/><rect x="73" y="49" width="11" height="11" fill="#ed008c"/><rect x="85" y="49" width="11" height="11" fill="#ee105a"/><rect x="97" y="49" width="11" height="11" fill="#9d0a0f"/><rect x="109" y="49" width="11" height="11" fill="#a1410d"/><rect x="121" y="49" width="11" height="11" fill="#a36209"/><rect x="133" y="49" width="11" height="11" fill="#aba000"/><rect x="145" y="49" width="11" height="11" fill="#588528"/><rect x="157" y="49" width="11" height="11" fill="#197b30"/><rect x="169" y="49" width="11" height="11" fill="#007236"/><rect x="181" y="49" width="11" height="11" fill="#00736a"/><rect x="193" y="49" width="11" height="11" fill="#0076a4"/><rect x="205" y="49" width="11" height="11" fill="#004a80"/><rect x="1" y="61" width="11" height="11" fill="#003370"/><rect x="13" y="61" width="11" height="11" fill="#1d1363"/><rect x="25" y="61" width="11" height="11" fill="#450e61"/><rect x="37" y="61" width="11" height="11" fill="#62055f"/><rect x="49" y="61" width="11" height="11" fill="#9e005c"/><rect x="61" y="61" width="11" height="11" fill="#9d0039"/><rect x="73" y="61" width="11" height="11" fill="#790000"/><rect x="85" y="61" width="11" height="11" fill="#7b3000"/><rect x="97" y="61" width="11" height="11" fill="#7c4900"/><rect x="109" y="61" width="11" height="11" fill="#827a00"/><rect x="121" y="61" width="11" height="11" fill="#3e6617"/><rect x="133" y="61" width="11" height="11" fill="#045f20"/><rect x="145" y="61" width="11" height="11" fill="#005824"/><rect x="157" y="61" width="11" height="11" fill="#005951"/><rect x="169" y="61" width="11" height="11" fill="#005b7e"/><rect x="181" y="61" width="11" height="11" fill="#003562"/><rect x="193" y="61" width="11" height="11" fill="#002056"/><rect x="205" y="61" width="11" height="11" fill="#0c004b"/><rect x="1" y="73" width="11" height="11" fill="#30004a"/><rect x="13" y="73" width="11" height="11" fill="#4b0048"/><rect x="25" y="73" width="11" height="11" fill="#7a0045"/><rect x="37" y="73" width="11" height="11" fill="#7a0026"/><rect x="49" y="73" width="11" height="11" fill="#c7b299"/><rect x="61" y="73" width="11" height="11" fill="#998675"/><rect x="73" y="73" width="11" height="11" fill="#736357"/><rect x="85" y="73" width="11" height="11" fill="#534741"/><rect x="97" y="73" width="11" height="11" fill="#362f2d"/><rect x="109" y="73" width="11" height="11" fill="#c69c6d"/><rect x="121" y="73" width="11" height="11" fill="#a77c50"/><rect x="133" y="73" width="11" height="11" fill="#8c6239"/><rect x="145" y="73" width="11" height="11" fill="#744c28"/><rect x="157" y="73" width="11" height="11" fill="#603813"/><rect x="169" y="73" width="11" height="11" fill="#fbc78e"/><rect x="181" y="73" width="11" height="11" fill="#f7a85c"/><rect x="193" y="73" width="11" height="11" fill="#e0903e"/><rect x="205" y="73" width="11" height="11" fill="#0a90f0"/><rect x="1" y="85" width="11" height="11" fill="#000000"/><rect x="13" y="85" width="11" height="11" fill="#000000"/><rect x="25" y="85" width="11" height="11" fill="#000000"/><rect x="37" y="85" width="11" height="11" fill="#0000ff"/><rect x="49" y="85" width="11" height="11" fill="#0000ff"/><rect x="61" y="85" width="11" height="11" fill="#e4ae8c"/><rect x="73" y="85" width="11" height="11" fill="#b67c44"/><rect x="85" y="85" width="11" height="11" fill="#000000"/><rect x="97" y="85" width="11" height="11" fill="#fde6c8"/><rect x="109" y="85" width="11" height="11" fill="#f09a5a"/><rect x="121" y="85" width="11" height="11" fill="#d68248"/></svg>
<div class="a" style="left:265px;top:433px;width:12px;height:98px;background:#ececec"></div>
<svg class="a" style="left:267px;top:440px" width="9" height="6"><path d="M0.5 5 L4.5 1 L8.5 5Z" fill="#999"/></svg>
<svg class="a" style="left:267px;top:518px" width="9" height="6"><path d="M0.5 1 L4.5 5 L8.5 1Z" fill="#999"/></svg>
<svg class="a" style="left:218px;top:530px" width="14" height="13"><rect x="1.5" y="3.5" width="9" height="8" fill="#fff" stroke="#333"/><path d="M4 3.5V1.5h9v8h-2.5" fill="none" stroke="#333"/><rect x="6" y="6" width="3" height="3" fill="#333"/></svg>
<svg class="a" style="left:245px;top:529px" width="13" height="13"><path d="M2 3h9M4 3V1h5v2" stroke="#555" fill="none"/><path d="M3 4h7l-1 8H4z" fill="#eee" stroke="#555"/><path d="M5 5v6M6.5 5v6M8 5v6" stroke="#777"/></svg>
<div class="a" style="left:268px;top:531px;width:11px;height:11px;background-image:radial-gradient(circle,#8a8a8a 0.7px,transparent 0.9px);background-size:3px 3px;clip-path:polygon(100% 0,100% 100%,0 100%)"></div>
<div class="a" style="left:45px;top:545px;width:236px;height:3px;background:#343434"></div>
<div class="a" style="left:45px;top:548px;width:236px;height:17px;background:linear-gradient(#9c9c9c,#888)"></div>
<div class="a" style="left:45px;top:548px;width:49px;height:17px;background:linear-gradient(#e4e4e4,#d6d6d6)"></div>
<div class="t" style="left:52px;top:551px;font-size:10px;color:#333a4a;font-weight:bold;letter-spacing:-0.77px">LAYERS</div>
<div class="a" style="left:95px;top:548px;width:65px;height:17px;background:linear-gradient(#a2a2a2,#8e8e8e);border-right:1px solid #6e6e6e;border-left:1px solid #b4b4b4"></div>
<div class="t" style="left:102px;top:551px;font-size:10px;color:#3a3a3a;font-weight:bold;letter-spacing:-0.44px">CHANNELS</div>
<svg class="a" style="left:263px;top:553px" width="16" height="12"><path d="M0 3h5l-2.5 3z" fill="#222"/><path d="M6 1.5h8M6 4.5h8M6 7.5h8" stroke="#222" stroke-width="1"/></svg>
<div class="a" style="left:50px;top:569px;width:130px;height:18px;background:#fff;border:1px solid #e8e8e8"></div>
<div class="t" style="left:54px;top:572px;font-size:10.5px;color:#1b1b2b;font-weight:normal;">Normal</div>
<svg class="a" style="left:169px;top:577px" width="8" height="5"><path d="M0 0h8l-4 4.5z" fill="#111"/></svg>
<div class="t" style="left:184px;top:572px;font-size:10.3px;color:#1b1b2b;font-weight:normal;">Opacity:</div>
<div class="a" style="left:226px;top:569px;width:50px;height:17px;background:#fff;border:1px solid #bcbcbc"></div>
<div class="a" style="left:260px;top:570px;width:15px;height:15px;background:linear-gradient(#f0f0f0,#d6d6d6);border-left:1px solid #c4c4c4"></div>
<svg class="a" style="left:266px;top:574px" width="5" height="8"><path d="M0 0v7l4-3.5z" fill="#4a5a90"/></svg>
<div class="t" style="left:231px;top:572px;font-size:10.5px;color:#111;font-weight:normal;">100%</div>
<div class="a" style="left:48px;top:589px;width:230px;height:1px;background:#a8a8a8;box-shadow:0 1px 0 #eee"></div>
<div class="t" style="left:53px;top:597px;font-size:10.3px;color:#1b1b2b;font-weight:normal;">Lock:</div>
<svg class="a" style="left:85px;top:597px" width="12" height="12"><rect x="0.5" y="0.5" width="11" height="11" fill="#fff" stroke="#444"/><rect x="3" y="3" width="3" height="3" fill="#ccc"/><rect x="6" y="6" width="3" height="3" fill="#ccc"/></svg>
<svg class="a" style="left:102px;top:596px" width="14" height="14"><path d="M13 1L5 9" stroke="#333" stroke-width="1.6"/><path d="M5 9 Q2 10 1 13 Q5 13 6 10Z" fill="#aaa" stroke="#333" stroke-width="0.7"/></svg>
<svg class="a" style="left:120px;top:596px" width="13" height="13"><path d="M6.5 0.5v12M0.5 6.5h12" stroke="#111" stroke-width="1.3"/><path d="M6.5 0L4.5 2.5h4zM6.5 13l-2-2.5h4zM0 6.5l2.5-2v4zM13 6.5l-2.5-2v4z" fill="#111"/></svg>
<svg class="a" style="left:139px;top:596px" width="11" height="13"><path d="M2.5 6V4Q2.5 1 5.5 1Q8.5 1 8.5 4V6" fill="none" stroke="#222" stroke-width="1.6"/><rect x="1" y="6" width="9" height="7" fill="#222"/></svg>
<div class="t" style="left:208px;top:597px;font-size:10.3px;color:#1b1b2b;font-weight:normal;">Fill:</div>
<div class="a" style="left:226px;top:595px;width:50px;height:17px;background:#fff;border:1px solid #bcbcbc"></div>
<div class="a" style="left:260px;top:596px;width:15px;height:15px;background:linear-gradient(#f0f0f0,#d6d6d6);border-left:1px solid #c4c4c4"></div>
<svg class="a" style="left:266px;top:600px" width="5" height="8"><path d="M0 0v7l4-3.5z" fill="#4a5a90"/></svg>
<div class="t" style="left:231px;top:598px;font-size:10.5px;color:#111;font-weight:normal;">100%</div>
<div class="a" style="left:48px;top:614px;width:230px;height:1px;background:#a0a0a0"></div>
<div class="a" style="left:45px;top:615px;width:220px;height:166px;background:#d6d6d6;overflow:hidden"></div>
<div class="a" style="left:45px;top:615px;width:220px;height:39px;border-bottom:1px solid #a6a6a6"></div>
<div class="a" style="left:69px;top:615px;width:1px;height:39px;background:#a6a6a6"></div>
<div class="a" style="left:50px;top:627px;width:15px;height:15px;border-top:1px solid #a8a8a8;border-left:1px solid #a8a8a8;box-shadow:1px 1px 0 #eee"></div>
<svg class="a" style="left:51px;top:630px" width="14" height="9"><path d="M1 4.5 Q7 -1 13 4.5 Q7 10 1 4.5Z" fill="#fff" stroke="#222" stroke-width="1.3"/><circle cx="7" cy="4.5" r="2.3" fill="#111"/></svg>
<div class="a" style="left:73px;top:619px;width:25px;height:32px;border:1px solid #000;background-color:#fff;background-image:linear-gradient(45deg,#cfcfcf 25%,transparent 25%,transparent 75%,#cfcfcf 75%),linear-gradient(45deg,#cfcfcf 25%,transparent 25%,transparent 75%,#cfcfcf 75%);background-size:8px 8px;background-position:0 0,4px 4px"></div>
<div class="t" style="left:106px;top:630px;font-size:10.5px;color:#1b1b2b;font-weight:normal;">tatoo</div>
<svg class="a" style="left:237px;top:629px" width="10" height="12"><path d="M2.5 5V3.5Q2.5 1 5 1Q7.5 1 7.5 3.5V5" fill="none" stroke="#333" stroke-width="1.5"/><rect x="1" y="5" width="8" height="6.5" fill="#333"/></svg>
<div class="a" style="left:45px;top:654px;width:220px;height:39px;border-bottom:1px solid #a6a6a6"></div>
<div class="a" style="left:69px;top:654px;width:1px;height:39px;background:#a6a6a6"></div>
<div class="a" style="left:50px;top:666px;width:15px;height:15px;border-top:1px solid #a8a8a8;border-left:1px solid #a8a8a8;box-shadow:1px 1px 0 #eee"></div>
<svg class="a" style="left:51px;top:669px" width="14" height="9"><path d="M1 4.5 Q7 -1 13 4.5 Q7 10 1 4.5Z" fill="#fff" stroke="#222" stroke-width="1.3"/><circle cx="7" cy="4.5" r="2.3" fill="#111"/></svg>
<div class="a" style="left:73px;top:658px;width:25px;height:32px;border:1px solid #000;background-color:#fff;background-image:linear-gradient(45deg,#cfcfcf 25%,transparent 25%,transparent 75%,#cfcfcf 75%),linear-gradient(45deg,#cfcfcf 25%,transparent 25%,transparent 75%,#cfcfcf 75%);background-size:8px 8px;background-position:0 0,4px 4px"></div>
<div class="t" style="left:106px;top:669px;font-size:10.5px;color:#1b1b2b;font-weight:normal;">lineart</div>
<svg class="a" style="left:237px;top:668px" width="10" height="12"><path d="M2.5 5V3.5Q2.5 1 5 1Q7.5 1 7.5 3.5V5" fill="none" stroke="#333" stroke-width="1.5"/><rect x="1" y="5" width="8" height="6.5" fill="#333"/></svg>
<div class="a" style="left:45px;top:693px;width:220px;height:39px;border-bottom:1px solid #a6a6a6"></div>
<div class="a" style="left:69px;top:693px;width:1px;height:39px;background:#a6a6a6"></div>
<div class="a" style="left:70px;top:693px;width:194px;height:39px;background:#3b97f6"></div>
<div class="a" style="left:50px;top:705px;width:15px;height:15px;border-top:1px solid #a8a8a8;border-left:1px solid #a8a8a8;box-shadow:1px 1px 0 #eee"></div>
<svg class="a" style="left:51px;top:708px" width="14" height="9"><path d="M1 4.5 Q7 -1 13 4.5 Q7 10 1 4.5Z" fill="#fff" stroke="#222" stroke-width="1.3"/><circle cx="7" cy="4.5" r="2.3" fill="#111"/></svg>
<svg class="a" style="left:79px;top:709px" width="8" height="9"><path d="M6 0.5H2.5V8M0 5.5l2.5 3 2.5-3" fill="none" stroke="#111" stroke-width="1.2"/></svg>
<div class="a" style="left:88px;top:695px;width:28px;height:35px;border:2px solid #000;background:#fff"></div>
<div class="a" style="left:91px;top:698px;width:22px;height:29px;border:1px solid #000;background-color:#fff;background-image:linear-gradient(45deg,#cfcfcf 25%,transparent 25%,transparent 75%,#cfcfcf 75%),linear-gradient(45deg,#cfcfcf 25%,transparent 25%,transparent 75%,#cfcfcf 75%);background-size:8px 8px;background-position:0 0,4px 4px"></div>
<div class="t" style="left:122px;top:708px;font-size:10.5px;color:#fff;font-weight:bold;">Layer 4</div>
<div class="a" style="left:45px;top:732px;width:220px;height:39px;border-bottom:1px solid #a6a6a6"></div>
<div class="a" style="left:69px;top:732px;width:1px;height:39px;background:#a6a6a6"></div>
<div class="a" style="left:50px;top:744px;width:15px;height:15px;border-top:1px solid #a8a8a8;border-left:1px solid #a8a8a8;box-shadow:1px 1px 0 #eee"></div>
<svg class="a" style="left:51px;top:747px" width="14" height="9"><path d="M1 4.5 Q7 -1 13 4.5 Q7 10 1 4.5Z" fill="#fff" stroke="#222" stroke-width="1.3"/><circle cx="7" cy="4.5" r="2.3" fill="#111"/></svg>
<svg class="a" style="left:79px;top:748px" width="8" height="9"><path d="M6 0.5H2.5V8M0 5.5l2.5 3 2.5-3" fill="none" stroke="#222" stroke-width="1.2"/></svg>
<div class="a" style="left:89px;top:736px;width:26px;height:32px;border:1px solid #000;background-color:#fff;background-image:linear-gradient(45deg,#cfcfcf 25%,transparent 25%,transparent 75%,#cfcfcf 75%),linear-gradient(45deg,#cfcfcf 25%,transparent 25%,transparent 75%,#cfcfcf 75%);background-size:8px 8px;background-position:0 0,4px 4px"></div>
<div class="t" style="left:122px;top:747px;font-size:10.5px;color:#1b1b2b;font-weight:normal;">Layer 3</div>
<div class="a" style="left:69px;top:771px;width:1px;height:10px;background:#a6a6a6"></div>
<div class="a" style="left:73px;top:775px;width:25px;height:7px;border:1px solid #000;border-bottom:none;background-color:#fff;background-image:linear-gradient(45deg,#cfcfcf 25%,transparent 25%,transparent 75%,#cfcfcf 75%),linear-gradient(45deg,#cfcfcf 25%,transparent 25%,transparent 75%,#cfcfcf 75%);background-size:8px 8px;background-position:0 0,4px 4px"></div>
<svg class="a" style="left:96px;top:739px" width="8" height="26"><path d="M4 1 Q6 8 5 14 L6 25" stroke="#f0b080" stroke-width="2" fill="none" opacity="0.8"/></svg>
<svg class="a" style="left:78px;top:776px" width="10" height="6"><path d="M2 6 L5 1 L8 6Z" fill="#e08040"/></svg>
<div class="a" style="left:265px;top:615px;width:13px;height:166px;background:#eeeeee"></div>
<svg class="a" style="left:267px;top:622px" width="9" height="6"><path d="M0.5 5 L4.5 1 L8.5 5Z" fill="#333"/></svg>
<svg class="a" style="left:267px;top:771px" width="9" height="6"><path d="M0.5 1 L4.5 5 L8.5 1Z" fill="#333"/></svg>
<div class="a" style="left:266px;top:634px;width:11px;height:91px;background:linear-gradient(90deg,#f4f4f4,#d4d4d4);border:1px solid #a8a8a8;border-radius:2px"></div>
<svg class="a" style="left:267px;top:675px" width="8" height="8"><path d="M1 1h6M1 3.5h6M1 6h6" stroke="#555"/></svg>
<div class="a" style="left:45px;top:781px;width:236px;height:1px;background:#a0a0a0"></div>
<svg class="a" style="left:79px;top:785px" width="19" height="10"><rect x="1" y="2" width="9" height="6" rx="3" fill="none" stroke="#777" stroke-width="1.6"/><rect x="9" y="2" width="9" height="6" rx="3" fill="none" stroke="#777" stroke-width="1.6"/></svg>
<div class="t" style="left:108px;top:782px;font-size:13px;color:#333;font-weight:bold;"><i>fx</i></div>
<svg class="a" style="left:122px;top:794px" width="4" height="3"><path d="M0 0h4l-2 2.5z" fill="#111"/></svg>
<svg class="a" style="left:136px;top:783px" width="14" height="14"><rect x="0.5" y="0.5" width="13" height="13" fill="#999" stroke="#333"/><circle cx="7" cy="7" r="4" fill="#fff"/></svg>
<svg class="a" style="left:164px;top:783px" width="18" height="15"><circle cx="7" cy="7" r="6" fill="#fff" stroke="#333" stroke-width="1.2"/><path d="M11.2 2.8 A6 6 0 0 1 2.8 11.2Z" fill="#333"/><path d="M14 12h4l-2 2.5z" fill="#111"/></svg>
<svg class="a" style="left:191px;top:785px" width="13" height="10"><path d="M0.5 1.5h5l1 1.5h6v6.5h-12z" fill="#eee" stroke="#444"/></svg>
<svg class="a" style="left:218px;top:784px" width="14" height="13"><rect x="1.5" y="3.5" width="9" height="8" fill="#fff" stroke="#333"/><path d="M4 3.5V1.5h9v8h-2.5" fill="none" stroke="#333"/><rect x="6" y="6" width="3" height="3" fill="#333"/></svg>
<svg class="a" style="left:245px;top:783px" width="13" height="13"><path d="M2 3h9M4 3V1h5v2" stroke="#555" fill="none"/><path d="M3 4h7l-1 8H4z" fill="#eee" stroke="#555"/><path d="M5 5v6M6.5 5v6M8 5v6" stroke="#777"/></svg>
<div class="a" style="left:268px;top:788px;width:11px;height:11px;background-image:radial-gradient(circle,#8a8a8a 0.7px,transparent 0.9px);background-size:3px 3px;clip-path:polygon(100% 0,100% 100%,0 100%)"></div>
<!-- TASKBAR -->
<div class="a" style="left:1420px;top:88px;width:15px;height:752px;background:#f0f0f0;border-left:1px solid #fafafa"></div>
<div class="a" style="left:1435px;top:88px;width:1px;height:768px;background:#3c3c3c"></div>
<svg class="a" style="left:1423px;top:93px" width="10" height="6"><path d="M0.5 5.5 L5 1 L9.5 5.5Z" fill="#333"/></svg>
<svg class="a" style="left:1423px;top:828px" width="10" height="6"><path d="M0.5 0.5 L5 5 L9.5 0.5Z" fill="#333"/></svg>
<div class="a" style="left:1421px;top:309px;width:13px;height:224px;background:linear-gradient(90deg,#f6f6f6,#dadada);border:1px solid #9a9a9a;border-radius:2px"></div>
<svg class="a" style="left:1424px;top:417px" width="8" height="8"><path d="M1 1h6M1 3.5h6M1 6h6" stroke="#555"/></svg>
<div class="a" style="left:42px;top:840px;width:1393px;height:16px;background:#d8d8d8;border-bottom:1px solid #4a4a4a;border-top:1px solid #9a9a9a"></div>
<div class="a" style="left:42px;top:841px;width:46px;height:14px;background:#fff"></div>
<div class="t" style="left:47px;top:842px;font-size:10.5px;color:#111;font-weight:normal;">33.33%</div>
<div class="a" style="left:89px;top:841px;width:22px;height:14px;background:#d4d4d4;border-left:1px solid #bbb;border-right:1px solid #aaa"></div>
<svg class="a" style="left:94px;top:842px" width="13" height="13"><circle cx="6" cy="6.5" r="5" fill="#eee" stroke="#444" stroke-width="1.2"/><path d="M3.5 5.5h4v4" fill="none" stroke="#222" stroke-width="1.4"/></svg>
<div class="t" style="left:156px;top:842px;font-size:10.2px;color:#1b1b2b;font-weight:normal;">Doc: 22.9M/38.7M</div>
<div class="a" style="left:282px;top:841px;width:15px;height:14px;background:#d0d0d0;border-left:1px solid #999;border-right:1px solid #999"></div>
<svg class="a" style="left:286px;top:843px" width="7" height="10"><path d="M0.5 0.5 L6 5 L0.5 9.5Z" fill="#000"/></svg>
<div class="a" style="left:297px;top:841px;width:1123px;height:14px;background:linear-gradient(#f4f4f4,#ececec)"></div>
<svg class="a" style="left:301px;top:844px" width="6" height="9"><path d="M5 0.5 L0.5 4.5 L5 8.5Z" fill="#444"/></svg>
<svg class="a" style="left:1410px;top:844px" width="6" height="9"><path d="M1 0.5 L5.5 4.5 L1 8.5Z" fill="#222"/></svg>
<div class="a" style="left:657px;top:842px;width:443px;height:12px;background:linear-gradient(#f6f6f6,#d4d4d4);border:1px solid #9a9a9a;border-radius:2px"></div>
<svg class="a" style="left:874px;top:844px" width="8" height="8"><path d="M1 1v6M3.5 1v6M6 1v6" stroke="#555"/></svg>
<div class="a" style="left:1420px;top:841px;width:15px;height:14px;background:#dcdcdc"></div>
<div class="a" style="left:0;top:856px;width:1440px;height:4px;background:linear-gradient(#e8e8e8,#cfcfcf);border-left:1px solid #8c8c8c"></div>
<div class="a" style="left:0;top:860px;width:1440px;height:40px;background:linear-gradient(#0a0706 0%,#120e0c 25%,#241c1a 38%,#4a3e3a 50%,#5e524e 62%,#564a46 76%,#2c2220 88%,#0c0806 100%);border-top:1px solid #000"></div>
<div class="a" style="left:0;top:861px;width:1440px;height:12px;background:linear-gradient(rgba(0,0,0,.25),rgba(0,0,0,0))"></div>
<svg class="a" style="left:6px;top:860px" width="42" height="40"><defs><radialGradient id="orb" cx="50%" cy="75%" r="65%"><stop offset="0" stop-color="#50d8ff"/><stop offset="0.45" stop-color="#1a80c8"/><stop offset="0.85" stop-color="#0c3a78"/><stop offset="1" stop-color="#0a2040"/></radialGradient><linearGradient id="gls" x1="0" y1="0" x2="0" y2="1"><stop offset="0" stop-color="#fff" stop-opacity=".55"/><stop offset="1" stop-color="#fff" stop-opacity="0"/></linearGradient></defs><circle cx="21" cy="20" r="18.5" fill="url(#orb)" stroke="#07101c" stroke-width="1"/><path d="M12 11 Q16 9 20.5 11.5 L19.5 18.5 Q15 16.5 11 18.5Z" fill="#f05a28"/><path d="M22 12 Q26 14 31 11.5 L30 18.5 Q25.5 20.5 21 18.5Z" fill="#8cc840"/><path d="M11 20 Q15 18 19.5 20.5 L18.5 27.5 Q14 25.5 10 27.5Z" fill="#30a8f0"/><path d="M21 20.5 Q25.5 22.5 30 20 L29 27 Q24.5 29 20 27Z" fill="#ffc420"/><ellipse cx="21" cy="12" rx="14" ry="9" fill="url(#gls)"/></svg>
<div class="a" style="left:60px;top:861px;width:58px;height:38px;border:1px solid rgba(200,200,200,.45);border-radius:3px;background:linear-gradient(rgba(255,255,255,.28),rgba(255,255,255,.08) 50%,rgba(255,255,255,.12));box-shadow:inset 0 0 2px rgba(255,255,255,.3)"></div>
<div class="a" style="left:804px;top:861px;width:58px;height:38px;border:1px solid rgba(200,200,200,.45);border-radius:3px;background:linear-gradient(rgba(255,255,255,.28),rgba(255,255,255,.08) 50%,rgba(255,255,255,.12));box-shadow:inset 0 0 2px rgba(255,255,255,.3)"></div>
<div class="a" style="left:432px;top:861px;width:58px;height:38px;border:1px solid rgba(230,230,230,.7);border-radius:3px;background:linear-gradient(#b4b4b4,#9a9a9a 50%,#8a8a8a);box-shadow:inset 0 0 2px rgba(255,255,255,.5)"></div>
<svg class="a" style="left:74px;top:865px" width="30" height="30"><rect x="4" y="1" width="22" height="26" fill="#6aaee0" stroke="#3a7ab8"/><rect x="7" y="3" width="16" height="22" fill="#9ad0f4"/><circle cx="15" cy="14" r="8.5" fill="#f07a18" stroke="#fff" stroke-width="1.3"/><path d="M12 9.5 L19.5 14 L12 18.5Z" fill="#fff"/></svg>
<svg class="a" style="left:134px;top:866px" width="34" height="29"><path d="M1 4h10l2 3h19v20H1z" fill="#e8c860"/><rect x="3" y="2" width="6" height="3" fill="#3a3"/><rect x="11" y="3" width="6" height="3" fill="#d33"/><rect x="19" y="5" width="6" height="3" fill="#48c"/><path d="M1 10h31v17H1z" fill="#f4dc88"/><path d="M7 17h19v10h-4v-6H11v6H7z" fill="#5aa8e0"/></svg>
<svg class="a" style="left:196px;top:864px" width="34" height="33"><circle cx="17" cy="16.5" r="15.5" fill="#0e2a4a" stroke="#406080" stroke-width="1.2"/><circle cx="17" cy="16.5" r="12" fill="#fff"/><circle cx="17" cy="16.5" r="11" fill="#06203c"/><text x="17" y="21" font-family="Liberation Sans" font-style="italic" font-weight="bold" font-size="13" fill="#fff" text-anchor="middle">hp</text></svg>
<svg class="a" style="left:260px;top:866px" width="30" height="28"><rect x="0.5" y="0.5" width="29" height="27" fill="#b898d0" stroke="#d8c0e8"/><text x="15" y="19" font-family="Liberation Sans" font-weight="bold" font-size="14" fill="#2a1040" text-anchor="middle">Pr</text></svg>
<svg class="a" style="left:322px;top:866px" width="30" height="28"><rect x="0.5" y="0.5" width="29" height="27" fill="#98a8c0" stroke="#c0cce0"/><text x="15" y="19" font-family="Liberation Sans" font-weight="bold" font-size="14" fill="#1c2438" text-anchor="middle">Ae</text></svg>
<svg class="a" style="left:384px;top:866px" width="30" height="28"><rect x="0.5" y="0.5" width="29" height="27" fill="#f0a020" stroke="#ffc860"/><text x="15" y="19" font-family="Liberation Sans" font-weight="bold" font-size="14" fill="#3a1c00" text-anchor="middle">Ai</text></svg>
<svg class="a" style="left:446px;top:866px" width="30" height="28"><rect x="0.5" y="0.5" width="29" height="27" fill="#2a8ce8" stroke="#60b0f0"/><text x="15" y="19" font-family="Liberation Sans" font-weight="bold" font-size="14" fill="#061a3a" text-anchor="middle">Ps</text></svg>
<svg class="a" style="left:508px;top:866px" width="30" height="28"><rect x="0.5" y="0.5" width="29" height="27" fill="#b0a070" stroke="#d0c090"/><text x="15" y="19" font-family="Liberation Sans" font-weight="bold" font-size="14" fill="#2a2410" text-anchor="middle">Sb</text></svg>
<svg class="a" style="left:570px;top:865px" width="32" height="32"><rect x="1" y="1" width="28" height="28" rx="3" fill="#50c040" stroke="#90e070"/><path d="M24 9 Q14 4 8 14 L5 11 L5 21 L15 21 L12 18 Q16 11 24 13Z" fill="#3a88d8"/><path d="M19 17 L28 17 L28 25 Q24 30 23.5 30 Q19 28 19 25Z" fill="#e8e8e8" stroke="#888" stroke-width="0.8"/><path d="M19 17h4.5v6.5H19zM23.5 23.5H28V25Q26 28 23.5 30z" fill="#2a6ad8"/><path d="M23.5 17H28v6.5h-4.5zM19 23.5h4.5V30Q19 28 19 25z" fill="#f0c020"/></svg>
<svg class="a" style="left:632px;top:864px" width="30" height="32"><rect x="1" y="1" width="28" height="29" rx="4" fill="#7a4ac8" stroke="#b090e8"/><text x="15" y="14" font-family="Liberation Sans" font-weight="bold" font-size="13" fill="#fff" text-anchor="middle">4</text><ellipse cx="15" cy="22" rx="9" ry="4.5" fill="#eee"/><circle cx="15" cy="20" r="3" fill="#555"/><circle cx="10" cy="24" r="1.5" fill="#333"/><circle cx="20" cy="24" r="1.5" fill="#333"/></svg>
<svg class="a" style="left:693px;top:865px" width="32" height="31"><rect x="1" y="1" width="30" height="29" rx="6" fill="#1a3a9a" stroke="#4a6ac0"/><rect x="8" y="6" width="9" height="11" fill="#f04080" transform="rotate(-15 12 11)"/><rect x="15" y="5" width="9" height="11" fill="#f0a020" transform="rotate(15 19 10)"/><rect x="7" y="13" width="9" height="11" fill="#40a0f0" transform="rotate(-10 11 18)"/><rect x="15" y="13" width="10" height="11" fill="#f06020" transform="rotate(10 20 18)"/><rect x="12" y="10" width="8" height="8" fill="#c0e040"/></svg>
<svg class="a" style="left:754px;top:863px" width="36" height="35"><circle cx="17" cy="19" r="12" fill="#2a9ae8"/><circle cx="17" cy="19" r="7" fill="#fff"/><rect x="10" y="17.5" width="15" height="3.5" fill="#2a9ae8"/><path d="M17 19 L30 24 L30 19Z" fill="#fff"/><path d="M5 31 Q-2 24 8 14 Q22 0 33 3 Q38 8 30 18" fill="none" stroke="#f0c020" stroke-width="2.6"/></svg>
<svg class="a" style="left:816px;top:865px" width="34" height="30"><rect x="3" y="3" width="28" height="23" fill="#3a8ad0"/><rect x="5" y="5" width="24" height="19" fill="#a8d8f0"/><path d="M5 16 Q14 10 29 14 L29 24 L5 24Z" fill="#4a9a60"/><path d="M0 5V0h6M28 0h6v5M34 24v6h-6M6 30H0v-6" fill="none" stroke="#48a8e8" stroke-width="2"/></svg>
<svg class="a" style="left:1237px;top:876px" width="10" height="7"><path d="M0.5 6 L5 1 L9.5 6Z" fill="#eee"/></svg>
<svg class="a" style="left:1259px;top:871px" width="18" height="18"><path d="M2 1v16" stroke="#fff" stroke-width="1.5"/><path d="M3 2h7l1.5 1.5H16v7H10L8.5 9H3z" fill="#fff"/></svg>
<svg class="a" style="left:1283px;top:870px" width="16" height="19"><rect x="1" y="3" width="13" height="15" fill="#eee" stroke="#444"/><rect x="4" y="6" width="8" height="8" fill="#222"/><path d="M6 1v5M10 1v5" stroke="#fff" stroke-width="1.5"/></svg>
<svg class="a" style="left:1306px;top:871px" width="20" height="18"><path d="M1 15h2v2H1zM5 12h2v5H5zM9 9h2v8H9zM13 5h2v12h-2zM17 1h2v16h-2z" fill="#eee"/><path d="M12 11 L17 18 L7 18Z" fill="#f0c000" stroke="#333" stroke-width="0.6"/><path d="M12 13v2.5" stroke="#000" stroke-width="1.2"/></svg>
<svg class="a" style="left:1331px;top:871px" width="17" height="17"><path d="M1 6h4l5-4.5v14L5 11H1z" fill="#eee"/><path d="M12 5 Q14 8.5 12 12M14 3 Q17.5 8.5 14 14" fill="none" stroke="#ccc" stroke-width="1.2"/></svg>
<div class="t" style="left:1367px;top:866px;font-size:12px;color:#fff;font-weight:normal;">6:18 AM</div>
<div class="t" style="left:1366px;top:882px;font-size:12px;color:#fff;font-weight:normal;">4/7/2015</div>
<div class="a" style="left:1426px;top:861px;width:14px;height:39px;background:linear-gradient(90deg,#2a2624,#5a5450 40%,#2a2420);border-left:1px solid #6a6a6a;border-top:1px solid #777"></div>
</body></html>
